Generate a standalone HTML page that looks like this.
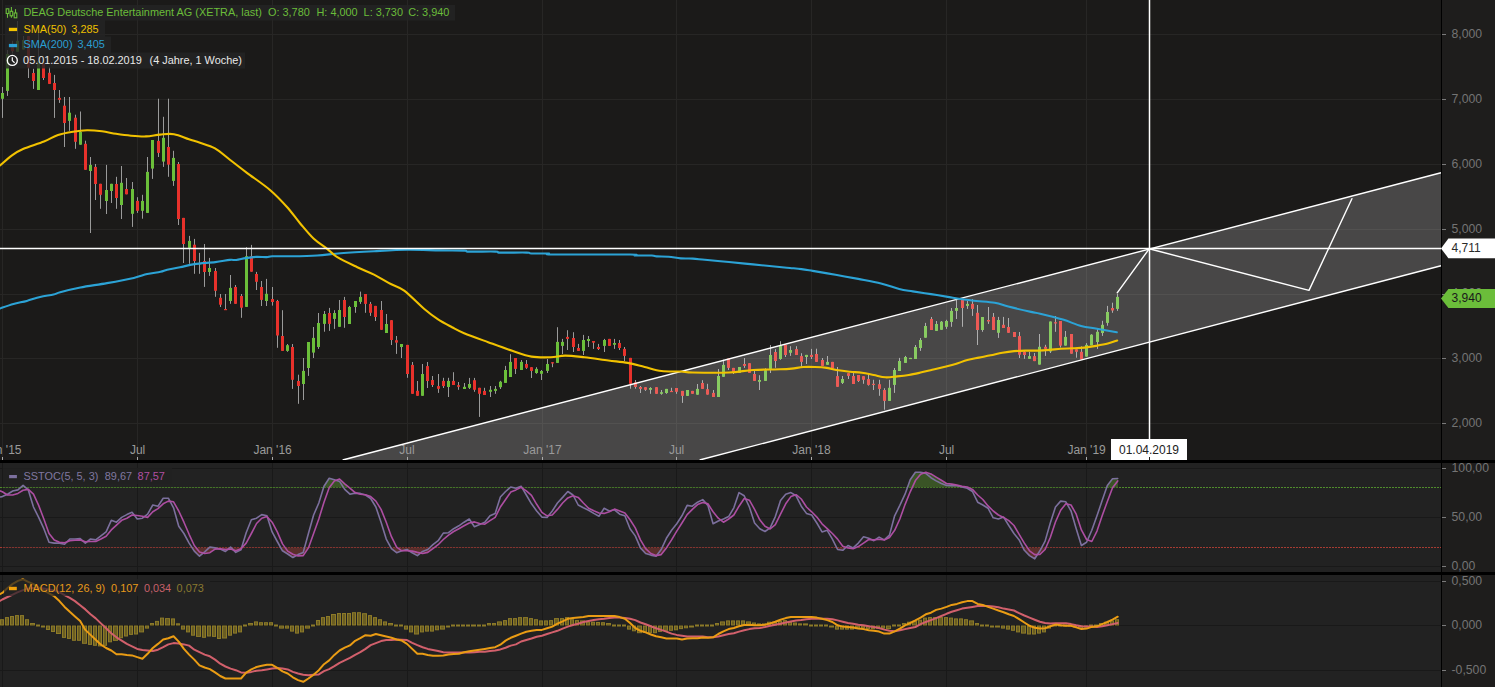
<!DOCTYPE html>
<html><head><meta charset="utf-8"><style>
html,body{margin:0;padding:0;background:#1e1d1c;width:1495px;height:687px;overflow:hidden}
svg{display:block}
</style></head><body>
<svg width="1495" height="687" viewBox="0 0 1495 687">
<rect x="0" y="0" width="1495" height="687" fill="#1e1d1c"/>
<rect x="0" y="0" width="1441" height="460" fill="#1b1a19"/>
<rect x="0" y="463" width="1441" height="109" fill="#222222"/>
<rect x="0" y="575" width="1441" height="112" fill="#222222"/>
<line x1="0" y1="423.5" x2="1441" y2="423.5" stroke="#272625" stroke-width="1"/>
<line x1="0" y1="358.5" x2="1441" y2="358.5" stroke="#272625" stroke-width="1"/>
<line x1="0" y1="294.5" x2="1441" y2="294.5" stroke="#272625" stroke-width="1"/>
<line x1="0" y1="229.5" x2="1441" y2="229.5" stroke="#272625" stroke-width="1"/>
<line x1="0" y1="164.5" x2="1441" y2="164.5" stroke="#272625" stroke-width="1"/>
<line x1="0" y1="99.5" x2="1441" y2="99.5" stroke="#272625" stroke-width="1"/>
<line x1="0" y1="34.5" x2="1441" y2="34.5" stroke="#272625" stroke-width="1"/>
<line x1="2.5" y1="0" x2="2.5" y2="460" stroke="#272625" stroke-width="1"/>
<line x1="137.5" y1="0" x2="137.5" y2="460" stroke="#272625" stroke-width="1"/>
<line x1="272.5" y1="0" x2="272.5" y2="460" stroke="#272625" stroke-width="1"/>
<line x1="407.5" y1="0" x2="407.5" y2="460" stroke="#272625" stroke-width="1"/>
<line x1="542.5" y1="0" x2="542.5" y2="460" stroke="#272625" stroke-width="1"/>
<line x1="676.5" y1="0" x2="676.5" y2="460" stroke="#272625" stroke-width="1"/>
<line x1="811.5" y1="0" x2="811.5" y2="460" stroke="#272625" stroke-width="1"/>
<line x1="946.5" y1="0" x2="946.5" y2="460" stroke="#272625" stroke-width="1"/>
<line x1="1086.5" y1="0" x2="1086.5" y2="460" stroke="#272625" stroke-width="1"/>
<rect x="2" y="87" width="1" height="30.9" fill="#9a9a9a"/>
<rect x="1" y="93" width="3" height="5.8" fill="#6bbf3a"/>
<rect x="7" y="50" width="1" height="45.9" fill="#9a9a9a"/>
<rect x="6" y="54" width="3" height="36.9" fill="#6bbf3a"/>
<rect x="12" y="40.8" width="1" height="12.8" fill="#9a9a9a"/>
<rect x="11" y="47.2" width="3" height="4" fill="#e8312b"/>
<rect x="17" y="21" width="1" height="30.8" fill="#9a9a9a"/>
<rect x="16" y="40.8" width="3" height="11" fill="#6bbf3a"/>
<rect x="23" y="36" width="1" height="13.5" fill="#9a9a9a"/>
<rect x="22" y="40" width="3" height="9.5" fill="#6bbf3a"/>
<rect x="28" y="36" width="1" height="42" fill="#9a9a9a"/>
<rect x="27" y="36.1" width="3" height="31.5" fill="#e8312b"/>
<rect x="33" y="68.7" width="1" height="20.2" fill="#9a9a9a"/>
<rect x="32" y="73" width="3" height="8" fill="#e8312b"/>
<rect x="38" y="32.6" width="1" height="57.4" fill="#9a9a9a"/>
<rect x="37" y="61" width="3" height="29" fill="#6bbf3a"/>
<rect x="43" y="63.5" width="1" height="16.5" fill="#9a9a9a"/>
<rect x="42" y="63.5" width="3" height="14.5" fill="#e8312b"/>
<rect x="49" y="67" width="1" height="16.9" fill="#9a9a9a"/>
<rect x="48" y="72.8" width="3" height="11.1" fill="#e8312b"/>
<rect x="54" y="74.9" width="1" height="43" fill="#9a9a9a"/>
<rect x="53" y="83" width="3" height="7" fill="#e8312b"/>
<rect x="59" y="90" width="1" height="12.9" fill="#9a9a9a"/>
<rect x="58" y="97.9" width="3" height="1.9" fill="#e8312b"/>
<rect x="64" y="97" width="1" height="50" fill="#9a9a9a"/>
<rect x="63" y="105.7" width="3" height="17.3" fill="#e8312b"/>
<rect x="69" y="97" width="1" height="33.8" fill="#9a9a9a"/>
<rect x="68" y="112.7" width="3" height="8.2" fill="#6bbf3a"/>
<rect x="75" y="114.7" width="1" height="34.1" fill="#9a9a9a"/>
<rect x="74" y="117.7" width="3" height="24.1" fill="#e8312b"/>
<rect x="80" y="111.5" width="1" height="33.2" fill="#9a9a9a"/>
<rect x="79" y="131.9" width="3" height="12.8" fill="#6bbf3a"/>
<rect x="85" y="140.7" width="1" height="29.1" fill="#9a9a9a"/>
<rect x="84" y="143.8" width="3" height="26" fill="#e8312b"/>
<rect x="90" y="157" width="1" height="76" fill="#9a9a9a"/>
<rect x="89" y="164.9" width="3" height="6.1" fill="#6bbf3a"/>
<rect x="95" y="164" width="1" height="36" fill="#9a9a9a"/>
<rect x="94" y="166.9" width="3" height="17.1" fill="#e8312b"/>
<rect x="100" y="183.8" width="1" height="25" fill="#9a9a9a"/>
<rect x="99" y="183.8" width="3" height="11" fill="#e8312b"/>
<rect x="106" y="164.9" width="1" height="49.1" fill="#9a9a9a"/>
<rect x="105" y="190" width="3" height="11" fill="#6bbf3a"/>
<rect x="111" y="183.8" width="1" height="19.2" fill="#9a9a9a"/>
<rect x="110" y="183.8" width="3" height="7.2" fill="#6bbf3a"/>
<rect x="116" y="176.8" width="1" height="32" fill="#9a9a9a"/>
<rect x="115" y="184" width="3" height="14" fill="#e8312b"/>
<rect x="121" y="166" width="1" height="53" fill="#9a9a9a"/>
<rect x="120" y="182.8" width="3" height="22.2" fill="#6bbf3a"/>
<rect x="126" y="178" width="1" height="16.3" fill="#9a9a9a"/>
<rect x="125" y="189" width="3" height="5.3" fill="#e8312b"/>
<rect x="132" y="182" width="1" height="44.9" fill="#9a9a9a"/>
<rect x="131" y="189" width="3" height="24.8" fill="#6bbf3a"/>
<rect x="137" y="197.2" width="1" height="15.7" fill="#9a9a9a"/>
<rect x="136" y="200.9" width="3" height="9.9" fill="#e8312b"/>
<rect x="142" y="194.8" width="1" height="23.9" fill="#9a9a9a"/>
<rect x="141" y="200.9" width="3" height="9.9" fill="#6bbf3a"/>
<rect x="147" y="157" width="1" height="55.9" fill="#9a9a9a"/>
<rect x="146" y="171.9" width="3" height="41" fill="#6bbf3a"/>
<rect x="152" y="140" width="1" height="38.9" fill="#9a9a9a"/>
<rect x="151" y="140" width="3" height="28.6" fill="#6bbf3a"/>
<rect x="158" y="98.7" width="1" height="58.3" fill="#9a9a9a"/>
<rect x="157" y="140.9" width="3" height="12" fill="#e8312b"/>
<rect x="163" y="116.8" width="1" height="50.1" fill="#9a9a9a"/>
<rect x="162" y="137.8" width="3" height="23.8" fill="#6bbf3a"/>
<rect x="168" y="98.7" width="1" height="78.1" fill="#9a9a9a"/>
<rect x="167" y="147" width="3" height="17.6" fill="#e8312b"/>
<rect x="173" y="150.8" width="1" height="35.1" fill="#9a9a9a"/>
<rect x="172" y="157.9" width="3" height="23" fill="#6bbf3a"/>
<rect x="178" y="162" width="1" height="63" fill="#9a9a9a"/>
<rect x="177" y="164" width="3" height="55" fill="#e8312b"/>
<rect x="183" y="217.9" width="1" height="45.1" fill="#9a9a9a"/>
<rect x="182" y="217.9" width="3" height="26.1" fill="#e8312b"/>
<rect x="189" y="235.9" width="1" height="27.9" fill="#9a9a9a"/>
<rect x="188" y="240.9" width="3" height="7" fill="#6bbf3a"/>
<rect x="194" y="238.9" width="1" height="34.9" fill="#9a9a9a"/>
<rect x="193" y="244.7" width="3" height="16.3" fill="#e8312b"/>
<rect x="199" y="252.9" width="1" height="20.9" fill="#9a9a9a"/>
<rect x="198" y="263" width="3" height="1.2" fill="#6bbf3a"/>
<rect x="204" y="244" width="1" height="42.9" fill="#9a9a9a"/>
<rect x="203" y="261" width="3" height="11" fill="#e8312b"/>
<rect x="209" y="257.9" width="1" height="18" fill="#9a9a9a"/>
<rect x="208" y="268" width="3" height="4" fill="#6bbf3a"/>
<rect x="215" y="268" width="1" height="28.8" fill="#9a9a9a"/>
<rect x="214" y="271" width="3" height="19.8" fill="#e8312b"/>
<rect x="220" y="294" width="1" height="13" fill="#9a9a9a"/>
<rect x="219" y="297.8" width="3" height="6.9" fill="#e8312b"/>
<rect x="225" y="294" width="1" height="16" fill="#9a9a9a"/>
<rect x="224" y="309" width="3" height="1.2" fill="#e8312b"/>
<rect x="230" y="275" width="1" height="28.8" fill="#9a9a9a"/>
<rect x="229" y="287.9" width="3" height="13.1" fill="#6bbf3a"/>
<rect x="235" y="285" width="1" height="18.8" fill="#9a9a9a"/>
<rect x="234" y="287" width="3" height="16.8" fill="#e8312b"/>
<rect x="241" y="294" width="1" height="23.8" fill="#9a9a9a"/>
<rect x="240" y="296" width="3" height="11.7" fill="#e8312b"/>
<rect x="246" y="247.2" width="1" height="59.7" fill="#9a9a9a"/>
<rect x="245" y="256.2" width="3" height="50.7" fill="#6bbf3a"/>
<rect x="251" y="244.9" width="1" height="26.8" fill="#9a9a9a"/>
<rect x="250" y="256.2" width="3" height="15.5" fill="#e8312b"/>
<rect x="256" y="271.9" width="1" height="18.1" fill="#9a9a9a"/>
<rect x="255" y="274" width="3" height="7.8" fill="#e8312b"/>
<rect x="261" y="281" width="1" height="25" fill="#9a9a9a"/>
<rect x="260" y="287" width="3" height="12.9" fill="#e8312b"/>
<rect x="266" y="278.9" width="1" height="27.1" fill="#9a9a9a"/>
<rect x="265" y="293.8" width="3" height="7.2" fill="#6bbf3a"/>
<rect x="272" y="287" width="1" height="18.6" fill="#9a9a9a"/>
<rect x="271" y="299" width="3" height="3" fill="#e8312b"/>
<rect x="277" y="299.9" width="1" height="47.9" fill="#9a9a9a"/>
<rect x="276" y="301" width="3" height="34.5" fill="#e8312b"/>
<rect x="282" y="310.2" width="1" height="40.7" fill="#9a9a9a"/>
<rect x="281" y="336" width="3" height="14.9" fill="#e8312b"/>
<rect x="287" y="344" width="1" height="7.8" fill="#9a9a9a"/>
<rect x="286" y="345.2" width="3" height="5.7" fill="#6bbf3a"/>
<rect x="292" y="344" width="1" height="44.9" fill="#9a9a9a"/>
<rect x="291" y="347" width="3" height="32.8" fill="#e8312b"/>
<rect x="298" y="374.7" width="1" height="29.1" fill="#9a9a9a"/>
<rect x="297" y="381" width="3" height="5" fill="#e8312b"/>
<rect x="303" y="358" width="1" height="42" fill="#9a9a9a"/>
<rect x="302" y="370.9" width="3" height="13.1" fill="#6bbf3a"/>
<rect x="308" y="342" width="1" height="33.9" fill="#9a9a9a"/>
<rect x="307" y="342" width="3" height="26" fill="#6bbf3a"/>
<rect x="313" y="327" width="1" height="31" fill="#9a9a9a"/>
<rect x="312" y="337.9" width="3" height="14.7" fill="#6bbf3a"/>
<rect x="318" y="313" width="1" height="35.9" fill="#9a9a9a"/>
<rect x="317" y="323" width="3" height="24" fill="#6bbf3a"/>
<rect x="324" y="311" width="1" height="20.7" fill="#9a9a9a"/>
<rect x="323" y="314" width="3" height="9.9" fill="#6bbf3a"/>
<rect x="329" y="307.9" width="1" height="23" fill="#9a9a9a"/>
<rect x="328" y="313" width="3" height="10.9" fill="#e8312b"/>
<rect x="334" y="310.2" width="1" height="18.7" fill="#9a9a9a"/>
<rect x="333" y="313" width="3" height="5.9" fill="#6bbf3a"/>
<rect x="339" y="300" width="1" height="26.8" fill="#9a9a9a"/>
<rect x="338" y="310" width="3" height="16.8" fill="#6bbf3a"/>
<rect x="344" y="296.9" width="1" height="30.9" fill="#9a9a9a"/>
<rect x="343" y="300" width="3" height="17" fill="#e8312b"/>
<rect x="349" y="305.9" width="1" height="18.1" fill="#9a9a9a"/>
<rect x="348" y="307" width="3" height="17" fill="#6bbf3a"/>
<rect x="355" y="301" width="1" height="11.8" fill="#9a9a9a"/>
<rect x="354" y="301" width="3" height="6" fill="#6bbf3a"/>
<rect x="360" y="291.6" width="1" height="12.3" fill="#9a9a9a"/>
<rect x="359" y="296.9" width="3" height="5" fill="#6bbf3a"/>
<rect x="365" y="294" width="1" height="18.8" fill="#9a9a9a"/>
<rect x="364" y="294" width="3" height="9.9" fill="#e8312b"/>
<rect x="370" y="301.9" width="1" height="14" fill="#9a9a9a"/>
<rect x="369" y="303.9" width="3" height="8.9" fill="#e8312b"/>
<rect x="375" y="305.9" width="1" height="15.1" fill="#9a9a9a"/>
<rect x="374" y="305.9" width="3" height="11.1" fill="#e8312b"/>
<rect x="381" y="301" width="1" height="28.8" fill="#9a9a9a"/>
<rect x="380" y="310" width="3" height="19.8" fill="#e8312b"/>
<rect x="386" y="314" width="1" height="19" fill="#9a9a9a"/>
<rect x="385" y="324" width="3" height="9" fill="#6bbf3a"/>
<rect x="391" y="320.2" width="1" height="24.8" fill="#9a9a9a"/>
<rect x="390" y="320.2" width="3" height="19.8" fill="#e8312b"/>
<rect x="396" y="336" width="1" height="17.9" fill="#9a9a9a"/>
<rect x="395" y="340.2" width="3" height="2.4" fill="#e8312b"/>
<rect x="401" y="344" width="1" height="14" fill="#9a9a9a"/>
<rect x="400" y="344" width="3" height="3" fill="#6bbf3a"/>
<rect x="407" y="344.9" width="1" height="32.9" fill="#9a9a9a"/>
<rect x="406" y="344.9" width="3" height="29.1" fill="#e8312b"/>
<rect x="412" y="362" width="1" height="31.8" fill="#9a9a9a"/>
<rect x="411" y="364.9" width="3" height="28.9" fill="#e8312b"/>
<rect x="417" y="381" width="1" height="14.8" fill="#9a9a9a"/>
<rect x="416" y="390.8" width="3" height="5" fill="#e8312b"/>
<rect x="422" y="364" width="1" height="31.8" fill="#9a9a9a"/>
<rect x="421" y="374" width="3" height="21.8" fill="#6bbf3a"/>
<rect x="427" y="362" width="1" height="26" fill="#9a9a9a"/>
<rect x="426" y="366.1" width="3" height="14.9" fill="#e8312b"/>
<rect x="432" y="376" width="1" height="11" fill="#9a9a9a"/>
<rect x="431" y="380" width="3" height="5" fill="#e8312b"/>
<rect x="438" y="374" width="1" height="18.9" fill="#9a9a9a"/>
<rect x="437" y="386.1" width="3" height="2.7" fill="#e8312b"/>
<rect x="443" y="377.8" width="1" height="10.2" fill="#9a9a9a"/>
<rect x="442" y="380.9" width="3" height="5.2" fill="#e8312b"/>
<rect x="448" y="377.8" width="1" height="19.2" fill="#9a9a9a"/>
<rect x="447" y="380.9" width="3" height="6.1" fill="#6bbf3a"/>
<rect x="453" y="372.2" width="1" height="12.8" fill="#9a9a9a"/>
<rect x="452" y="380.9" width="3" height="4.1" fill="#e8312b"/>
<rect x="458" y="382" width="1" height="7.8" fill="#9a9a9a"/>
<rect x="457" y="385.2" width="3" height="1.6" fill="#e8312b"/>
<rect x="464" y="383" width="1" height="6" fill="#9a9a9a"/>
<rect x="463" y="386.8" width="3" height="2.2" fill="#6bbf3a"/>
<rect x="469" y="377.9" width="1" height="11.1" fill="#9a9a9a"/>
<rect x="468" y="384" width="3" height="3.8" fill="#6bbf3a"/>
<rect x="474" y="377.9" width="1" height="13.9" fill="#9a9a9a"/>
<rect x="473" y="380.2" width="3" height="9.6" fill="#e8312b"/>
<rect x="479" y="387.8" width="1" height="29.1" fill="#9a9a9a"/>
<rect x="478" y="387.8" width="3" height="6" fill="#e8312b"/>
<rect x="484" y="387.8" width="1" height="7.2" fill="#9a9a9a"/>
<rect x="483" y="390.9" width="3" height="4.1" fill="#e8312b"/>
<rect x="490" y="386" width="1" height="11" fill="#9a9a9a"/>
<rect x="489" y="389.8" width="3" height="2" fill="#6bbf3a"/>
<rect x="495" y="386" width="1" height="7.8" fill="#9a9a9a"/>
<rect x="494" y="388.9" width="3" height="2" fill="#6bbf3a"/>
<rect x="500" y="380.8" width="1" height="8.2" fill="#9a9a9a"/>
<rect x="499" y="381.7" width="3" height="5.5" fill="#6bbf3a"/>
<rect x="505" y="365.9" width="1" height="17" fill="#9a9a9a"/>
<rect x="504" y="370" width="3" height="12.9" fill="#6bbf3a"/>
<rect x="510" y="354.2" width="1" height="22.8" fill="#9a9a9a"/>
<rect x="509" y="361.9" width="3" height="15.1" fill="#6bbf3a"/>
<rect x="515" y="358" width="1" height="16" fill="#9a9a9a"/>
<rect x="514" y="358" width="3" height="10.9" fill="#e8312b"/>
<rect x="521" y="360" width="1" height="10" fill="#9a9a9a"/>
<rect x="520" y="361.9" width="3" height="8.1" fill="#6bbf3a"/>
<rect x="526" y="360" width="1" height="8.9" fill="#9a9a9a"/>
<rect x="525" y="364" width="3" height="3.8" fill="#e8312b"/>
<rect x="531" y="367.2" width="1" height="10.8" fill="#9a9a9a"/>
<rect x="530" y="367.2" width="3" height="3.7" fill="#e8312b"/>
<rect x="536" y="367.2" width="1" height="6.6" fill="#9a9a9a"/>
<rect x="535" y="368.9" width="3" height="4.1" fill="#6bbf3a"/>
<rect x="541" y="370" width="1" height="10" fill="#9a9a9a"/>
<rect x="540" y="371" width="3" height="2.8" fill="#6bbf3a"/>
<rect x="547" y="359" width="1" height="14" fill="#9a9a9a"/>
<rect x="546" y="364" width="3" height="6.9" fill="#6bbf3a"/>
<rect x="552" y="362.2" width="1" height="5" fill="#9a9a9a"/>
<rect x="551" y="362.2" width="3" height="1.3" fill="#e8312b"/>
<rect x="557" y="327.2" width="1" height="35.7" fill="#9a9a9a"/>
<rect x="556" y="341.9" width="3" height="21" fill="#6bbf3a"/>
<rect x="562" y="338.9" width="1" height="15.1" fill="#9a9a9a"/>
<rect x="561" y="341.9" width="3" height="4" fill="#6bbf3a"/>
<rect x="567" y="330.2" width="1" height="19.8" fill="#9a9a9a"/>
<rect x="566" y="336.9" width="3" height="2" fill="#e8312b"/>
<rect x="573" y="332.2" width="1" height="19.8" fill="#9a9a9a"/>
<rect x="572" y="338" width="3" height="9" fill="#e8312b"/>
<rect x="578" y="343.9" width="1" height="7" fill="#9a9a9a"/>
<rect x="577" y="348" width="3" height="2.9" fill="#e8312b"/>
<rect x="583" y="334.9" width="1" height="20.1" fill="#9a9a9a"/>
<rect x="582" y="340" width="3" height="10.9" fill="#6bbf3a"/>
<rect x="588" y="336" width="1" height="11" fill="#9a9a9a"/>
<rect x="587" y="339" width="3" height="2" fill="#6bbf3a"/>
<rect x="593" y="341" width="1" height="7.9" fill="#9a9a9a"/>
<rect x="592" y="341" width="3" height="1.7" fill="#e8312b"/>
<rect x="598" y="343.9" width="1" height="6.1" fill="#9a9a9a"/>
<rect x="597" y="347" width="3" height="2" fill="#e8312b"/>
<rect x="604" y="338.9" width="1" height="13.1" fill="#9a9a9a"/>
<rect x="603" y="340" width="3" height="5.9" fill="#6bbf3a"/>
<rect x="609" y="338.9" width="1" height="7" fill="#9a9a9a"/>
<rect x="608" y="338.9" width="3" height="7" fill="#e8312b"/>
<rect x="614" y="338.9" width="1" height="10" fill="#9a9a9a"/>
<rect x="613" y="343" width="3" height="1.8" fill="#6bbf3a"/>
<rect x="619" y="340" width="1" height="10" fill="#9a9a9a"/>
<rect x="618" y="343" width="3" height="5" fill="#e8312b"/>
<rect x="624" y="347" width="1" height="14" fill="#9a9a9a"/>
<rect x="623" y="348.9" width="3" height="7" fill="#e8312b"/>
<rect x="630" y="357.9" width="1" height="30.8" fill="#9a9a9a"/>
<rect x="629" y="357.9" width="3" height="25.9" fill="#e8312b"/>
<rect x="635" y="380" width="1" height="8.7" fill="#9a9a9a"/>
<rect x="634" y="382.3" width="3" height="4.7" fill="#e8312b"/>
<rect x="640" y="386" width="1" height="7" fill="#9a9a9a"/>
<rect x="639" y="387" width="3" height="1.9" fill="#e8312b"/>
<rect x="645" y="387.2" width="1" height="3.7" fill="#9a9a9a"/>
<rect x="644" y="387.2" width="3" height="2.6" fill="#e8312b"/>
<rect x="650" y="387.2" width="1" height="6.6" fill="#9a9a9a"/>
<rect x="649" y="388" width="3" height="1.8" fill="#6bbf3a"/>
<rect x="656" y="387.2" width="1" height="6.6" fill="#9a9a9a"/>
<rect x="655" y="387.2" width="3" height="6.6" fill="#e8312b"/>
<rect x="661" y="390" width="1" height="4.7" fill="#9a9a9a"/>
<rect x="660" y="392.2" width="3" height="1.6" fill="#6bbf3a"/>
<rect x="666" y="388.9" width="1" height="4.9" fill="#9a9a9a"/>
<rect x="665" y="388.9" width="3" height="4.1" fill="#6bbf3a"/>
<rect x="671" y="387.8" width="1" height="4.2" fill="#9a9a9a"/>
<rect x="670" y="390.9" width="3" height="1.2" fill="#e8312b"/>
<rect x="676" y="388" width="1" height="5.8" fill="#9a9a9a"/>
<rect x="675" y="388" width="3" height="3.8" fill="#e8312b"/>
<rect x="682" y="390.9" width="1" height="12" fill="#9a9a9a"/>
<rect x="681" y="390.9" width="3" height="5" fill="#e8312b"/>
<rect x="687" y="390" width="1" height="5.9" fill="#9a9a9a"/>
<rect x="686" y="390" width="3" height="5.9" fill="#6bbf3a"/>
<rect x="692" y="390.9" width="1" height="2.9" fill="#9a9a9a"/>
<rect x="691" y="390.9" width="3" height="2.9" fill="#e8312b"/>
<rect x="697" y="384" width="1" height="10.7" fill="#9a9a9a"/>
<rect x="696" y="388.9" width="3" height="5.8" fill="#6bbf3a"/>
<rect x="702" y="380.2" width="1" height="8.7" fill="#9a9a9a"/>
<rect x="701" y="383" width="3" height="5.9" fill="#e8312b"/>
<rect x="707" y="383.8" width="1" height="10.8" fill="#9a9a9a"/>
<rect x="706" y="389.2" width="3" height="5.4" fill="#e8312b"/>
<rect x="713" y="390" width="1" height="7" fill="#9a9a9a"/>
<rect x="712" y="392.9" width="3" height="4.1" fill="#e8312b"/>
<rect x="718" y="369" width="1" height="28" fill="#9a9a9a"/>
<rect x="717" y="376" width="3" height="21" fill="#6bbf3a"/>
<rect x="723" y="359.7" width="1" height="17.1" fill="#9a9a9a"/>
<rect x="722" y="364.9" width="3" height="11.9" fill="#6bbf3a"/>
<rect x="728" y="358.5" width="1" height="11.5" fill="#9a9a9a"/>
<rect x="727" y="358.5" width="3" height="9.4" fill="#e8312b"/>
<rect x="733" y="367.9" width="1" height="6.1" fill="#9a9a9a"/>
<rect x="732" y="367.9" width="3" height="4.1" fill="#e8312b"/>
<rect x="739" y="367" width="1" height="5.9" fill="#9a9a9a"/>
<rect x="738" y="367" width="3" height="5.9" fill="#6bbf3a"/>
<rect x="744" y="358" width="1" height="9.9" fill="#9a9a9a"/>
<rect x="743" y="364" width="3" height="1.9" fill="#e8312b"/>
<rect x="749" y="363.2" width="1" height="9.7" fill="#9a9a9a"/>
<rect x="748" y="363.2" width="3" height="9.7" fill="#e8312b"/>
<rect x="754" y="370" width="1" height="10.9" fill="#9a9a9a"/>
<rect x="753" y="374" width="3" height="6.9" fill="#e8312b"/>
<rect x="759" y="375.2" width="1" height="14.8" fill="#9a9a9a"/>
<rect x="758" y="380" width="3" height="1.8" fill="#6bbf3a"/>
<rect x="765" y="368.3" width="1" height="12.6" fill="#9a9a9a"/>
<rect x="764" y="370.2" width="3" height="10.7" fill="#6bbf3a"/>
<rect x="770" y="345" width="1" height="28" fill="#9a9a9a"/>
<rect x="769" y="355" width="3" height="13.9" fill="#6bbf3a"/>
<rect x="775" y="349.1" width="1" height="18.7" fill="#9a9a9a"/>
<rect x="774" y="352" width="3" height="9" fill="#e8312b"/>
<rect x="780" y="341.2" width="1" height="18.6" fill="#9a9a9a"/>
<rect x="779" y="345.9" width="3" height="13.1" fill="#6bbf3a"/>
<rect x="785" y="345" width="1" height="12" fill="#9a9a9a"/>
<rect x="784" y="345" width="3" height="10" fill="#e8312b"/>
<rect x="790" y="346.2" width="1" height="9.7" fill="#9a9a9a"/>
<rect x="789" y="350" width="3" height="2.8" fill="#6bbf3a"/>
<rect x="796" y="346.2" width="1" height="8.8" fill="#9a9a9a"/>
<rect x="795" y="349.1" width="3" height="5.9" fill="#e8312b"/>
<rect x="801" y="353.2" width="1" height="13.4" fill="#9a9a9a"/>
<rect x="800" y="356.1" width="3" height="5.8" fill="#e8312b"/>
<rect x="806" y="354.9" width="1" height="9.1" fill="#9a9a9a"/>
<rect x="805" y="354.9" width="3" height="2.1" fill="#6bbf3a"/>
<rect x="811" y="348.9" width="1" height="10.1" fill="#9a9a9a"/>
<rect x="810" y="354.9" width="3" height="2.1" fill="#e8312b"/>
<rect x="816" y="348.7" width="1" height="13.2" fill="#9a9a9a"/>
<rect x="815" y="354" width="3" height="7.9" fill="#e8312b"/>
<rect x="822" y="358" width="1" height="7.9" fill="#9a9a9a"/>
<rect x="821" y="360" width="3" height="5.9" fill="#e8312b"/>
<rect x="827" y="356" width="1" height="8.8" fill="#9a9a9a"/>
<rect x="826" y="361.9" width="3" height="2.9" fill="#6bbf3a"/>
<rect x="832" y="361.9" width="1" height="6.6" fill="#9a9a9a"/>
<rect x="831" y="361.9" width="3" height="6.6" fill="#e8312b"/>
<rect x="837" y="367" width="1" height="19.8" fill="#9a9a9a"/>
<rect x="836" y="376.1" width="3" height="10.7" fill="#e8312b"/>
<rect x="842" y="376" width="1" height="8" fill="#9a9a9a"/>
<rect x="841" y="379" width="3" height="3.9" fill="#6bbf3a"/>
<rect x="848" y="373.2" width="1" height="5.8" fill="#9a9a9a"/>
<rect x="847" y="373.2" width="3" height="2.7" fill="#e8312b"/>
<rect x="853" y="371.4" width="1" height="12.6" fill="#9a9a9a"/>
<rect x="852" y="376" width="3" height="8" fill="#e8312b"/>
<rect x="858" y="375" width="1" height="7" fill="#9a9a9a"/>
<rect x="857" y="375" width="3" height="6" fill="#e8312b"/>
<rect x="863" y="376.2" width="1" height="7.6" fill="#9a9a9a"/>
<rect x="862" y="376.2" width="3" height="3.6" fill="#e8312b"/>
<rect x="868" y="373.3" width="1" height="12.3" fill="#9a9a9a"/>
<rect x="867" y="379.1" width="3" height="5.8" fill="#e8312b"/>
<rect x="873" y="379.8" width="1" height="10.2" fill="#9a9a9a"/>
<rect x="872" y="383.8" width="3" height="1.2" fill="#e8312b"/>
<rect x="879" y="379.8" width="1" height="16" fill="#9a9a9a"/>
<rect x="878" y="384.2" width="3" height="4.7" fill="#e8312b"/>
<rect x="884" y="388.2" width="1" height="21.5" fill="#9a9a9a"/>
<rect x="883" y="390" width="3" height="10.9" fill="#e8312b"/>
<rect x="889" y="379.8" width="1" height="21.1" fill="#9a9a9a"/>
<rect x="888" y="387.8" width="3" height="13.1" fill="#6bbf3a"/>
<rect x="894" y="368" width="1" height="24.9" fill="#9a9a9a"/>
<rect x="893" y="370" width="3" height="14.9" fill="#6bbf3a"/>
<rect x="899" y="357.9" width="1" height="13.1" fill="#9a9a9a"/>
<rect x="898" y="361" width="3" height="10" fill="#6bbf3a"/>
<rect x="905" y="355.9" width="1" height="7" fill="#9a9a9a"/>
<rect x="904" y="357" width="3" height="5.9" fill="#6bbf3a"/>
<rect x="910" y="357.9" width="1" height="1.1" fill="#9a9a9a"/>
<rect x="909" y="357.9" width="3" height="1.2" fill="#6bbf3a"/>
<rect x="915" y="345" width="1" height="14" fill="#9a9a9a"/>
<rect x="914" y="347" width="3" height="12" fill="#6bbf3a"/>
<rect x="920" y="338" width="1" height="12.9" fill="#9a9a9a"/>
<rect x="919" y="340" width="3" height="8" fill="#6bbf3a"/>
<rect x="925" y="322.9" width="1" height="14.8" fill="#9a9a9a"/>
<rect x="924" y="326" width="3" height="11.7" fill="#6bbf3a"/>
<rect x="931" y="317" width="1" height="13" fill="#9a9a9a"/>
<rect x="930" y="319" width="3" height="11" fill="#e8312b"/>
<rect x="936" y="321" width="1" height="9.9" fill="#9a9a9a"/>
<rect x="935" y="324" width="3" height="6.9" fill="#6bbf3a"/>
<rect x="941" y="321" width="1" height="8.8" fill="#9a9a9a"/>
<rect x="940" y="321.7" width="3" height="8.1" fill="#6bbf3a"/>
<rect x="946" y="319.8" width="1" height="9.1" fill="#9a9a9a"/>
<rect x="945" y="321" width="3" height="5.8" fill="#6bbf3a"/>
<rect x="951" y="308" width="1" height="18.8" fill="#9a9a9a"/>
<rect x="950" y="310.9" width="3" height="11" fill="#6bbf3a"/>
<rect x="956" y="299.2" width="1" height="19.8" fill="#9a9a9a"/>
<rect x="955" y="308" width="3" height="2.9" fill="#6bbf3a"/>
<rect x="962" y="300" width="1" height="26.8" fill="#9a9a9a"/>
<rect x="961" y="300" width="3" height="8" fill="#e8312b"/>
<rect x="967" y="301" width="1" height="7.9" fill="#9a9a9a"/>
<rect x="966" y="303.9" width="3" height="2" fill="#6bbf3a"/>
<rect x="972" y="299.2" width="1" height="16.7" fill="#9a9a9a"/>
<rect x="971" y="303.9" width="3" height="5" fill="#e8312b"/>
<rect x="977" y="305" width="1" height="40" fill="#9a9a9a"/>
<rect x="976" y="312.8" width="3" height="17.2" fill="#e8312b"/>
<rect x="982" y="317" width="1" height="14.8" fill="#9a9a9a"/>
<rect x="981" y="317" width="3" height="13" fill="#6bbf3a"/>
<rect x="988" y="307" width="1" height="16.9" fill="#9a9a9a"/>
<rect x="987" y="320" width="3" height="1.5" fill="#e8312b"/>
<rect x="993" y="313" width="1" height="17" fill="#9a9a9a"/>
<rect x="992" y="316.9" width="3" height="13.1" fill="#e8312b"/>
<rect x="998" y="316.9" width="1" height="21" fill="#9a9a9a"/>
<rect x="997" y="320" width="3" height="12.8" fill="#6bbf3a"/>
<rect x="1003" y="316.9" width="1" height="11.1" fill="#9a9a9a"/>
<rect x="1002" y="324.8" width="3" height="3.2" fill="#e8312b"/>
<rect x="1008" y="318" width="1" height="14.8" fill="#9a9a9a"/>
<rect x="1007" y="327" width="3" height="5.8" fill="#e8312b"/>
<rect x="1014" y="332" width="1" height="5" fill="#9a9a9a"/>
<rect x="1013" y="332" width="3" height="5" fill="#e8312b"/>
<rect x="1019" y="332" width="1" height="26" fill="#9a9a9a"/>
<rect x="1018" y="336.1" width="3" height="18.6" fill="#e8312b"/>
<rect x="1024" y="350" width="1" height="8.8" fill="#9a9a9a"/>
<rect x="1023" y="351.8" width="3" height="3.2" fill="#e8312b"/>
<rect x="1029" y="351.8" width="1" height="7" fill="#9a9a9a"/>
<rect x="1028" y="356.1" width="3" height="2.7" fill="#6bbf3a"/>
<rect x="1034" y="353" width="1" height="8.1" fill="#9a9a9a"/>
<rect x="1033" y="356.1" width="3" height="5" fill="#e8312b"/>
<rect x="1039" y="334" width="1" height="30.6" fill="#9a9a9a"/>
<rect x="1038" y="346.8" width="3" height="17.8" fill="#6bbf3a"/>
<rect x="1045" y="344.8" width="1" height="11.1" fill="#9a9a9a"/>
<rect x="1044" y="346.8" width="3" height="2.1" fill="#e8312b"/>
<rect x="1050" y="321.5" width="1" height="31.5" fill="#9a9a9a"/>
<rect x="1049" y="321.5" width="3" height="30" fill="#6bbf3a"/>
<rect x="1055" y="316" width="1" height="15.8" fill="#9a9a9a"/>
<rect x="1054" y="322.2" width="3" height="1.3" fill="#e8312b"/>
<rect x="1060" y="321" width="1" height="26.5" fill="#9a9a9a"/>
<rect x="1059" y="321" width="3" height="24.6" fill="#e8312b"/>
<rect x="1065" y="331" width="1" height="14.6" fill="#9a9a9a"/>
<rect x="1064" y="336.9" width="3" height="8.7" fill="#6bbf3a"/>
<rect x="1071" y="334" width="1" height="19.7" fill="#9a9a9a"/>
<rect x="1070" y="334" width="3" height="19.7" fill="#e8312b"/>
<rect x="1076" y="349.3" width="1" height="8.4" fill="#9a9a9a"/>
<rect x="1075" y="349.3" width="3" height="2.5" fill="#e8312b"/>
<rect x="1081" y="346.4" width="1" height="13.1" fill="#9a9a9a"/>
<rect x="1080" y="351.8" width="3" height="7.7" fill="#e8312b"/>
<rect x="1086" y="343.1" width="1" height="13.5" fill="#9a9a9a"/>
<rect x="1085" y="344.9" width="3" height="11.7" fill="#6bbf3a"/>
<rect x="1091" y="334.2" width="1" height="11.1" fill="#9a9a9a"/>
<rect x="1090" y="334.7" width="3" height="10.6" fill="#6bbf3a"/>
<rect x="1097" y="328.9" width="1" height="20" fill="#9a9a9a"/>
<rect x="1096" y="331.8" width="3" height="10.2" fill="#6bbf3a"/>
<rect x="1102" y="320.8" width="1" height="15.1" fill="#9a9a9a"/>
<rect x="1101" y="324.8" width="3" height="8.2" fill="#6bbf3a"/>
<rect x="1107" y="305.9" width="1" height="19.8" fill="#9a9a9a"/>
<rect x="1106" y="312" width="3" height="10.9" fill="#6bbf3a"/>
<rect x="1112" y="302.7" width="1" height="10.1" fill="#9a9a9a"/>
<rect x="1111" y="308" width="3" height="2.5" fill="#e8312b"/>
<rect x="1117" y="294" width="1" height="16.9" fill="#9a9a9a"/>
<rect x="1116" y="296.9" width="3" height="12" fill="#6bbf3a"/>
<polygon points="342.62,460 1441.0,172.77 1441.0,265.76 699.62,460" fill="rgba(255,255,255,0.2)"/>
<line x1="342.62" y1="460" x2="1441.0" y2="172.77" stroke="#fff" stroke-width="1.4"/>
<line x1="699.62" y1="460" x2="1441.0" y2="265.76" stroke="#fff" stroke-width="1.4"/>
<path d="M0,308.5 C2.23,307.75 8.93,305.27 13.4,304 C17.87,302.73 22.35,302.08 26.8,300.9 C31.25,299.72 35.65,297.95 40.1,296.9 C44.55,295.85 50.15,295.38 53.5,294.6 C56.85,293.82 55.73,293.38 60.2,292.2 C64.67,291.02 72.5,289.02 80.3,287.5 C88.1,285.98 98.08,284.7 107,283.1 C115.92,281.5 127.1,279.4 133.8,277.9 C140.5,276.4 142.75,275.12 147.2,274.1 C151.65,273.08 157.17,272.53 160.5,271.8 C163.83,271.07 163.95,270.45 167.2,269.7 C170.45,268.95 175.47,268.23 180,267.3 C184.53,266.37 188.52,264.97 194.4,264.1 C200.28,263.23 209.4,262.8 215.3,262.1 C221.2,261.4 226.32,260.25 229.8,259.9 C233.28,259.55 233.53,260.3 236.2,260 C238.87,259.7 242.47,258.62 245.8,258.1 C249.13,257.58 252.72,257.07 256.2,256.9 C259.68,256.73 264.02,257.22 266.7,257.1 C269.38,256.98 268.35,256.33 272.3,256.2 C276.25,256.07 282.92,256.42 290.4,256.3 C297.88,256.18 308.83,256.02 317.2,255.5 C325.57,254.98 331.13,253.92 340.6,253.2 C350.07,252.48 362.85,251.77 374,251.2 C385.15,250.63 396.5,249.93 407.5,249.8 C418.5,249.67 430.58,250.27 440,250.4 C449.42,250.53 459.17,250.4 464,250.6 C468.83,250.8 463.77,251.43 469,251.6 C474.23,251.77 490.2,251.43 495.4,251.6 C500.6,251.77 494.98,252.43 500.2,252.6 C505.42,252.77 521.48,252.45 526.7,252.6 C531.92,252.75 527.88,253.35 531.5,253.5 C535.12,253.65 544.78,253.33 548.4,253.5 C552.02,253.67 539.57,254.33 553.2,254.5 C566.83,254.67 616.57,254.33 630.2,254.5 C643.83,254.67 631.38,255.33 635,255.5 C638.62,255.67 648.28,255.35 651.9,255.5 C655.52,255.65 653.9,256.2 656.7,256.4 C659.5,256.6 664.68,256.37 668.7,256.7 C672.72,257.03 676.78,258.08 680.8,258.4 C684.82,258.72 688.78,258.37 692.8,258.6 C696.82,258.83 698.87,259.23 704.9,259.8 C710.93,260.37 720.98,261.23 729,262 C737.02,262.77 745,263.6 753,264.4 C761,265.2 770.83,266.2 777,266.8 C783.17,267.4 785.93,267.62 790,268 C794.07,268.38 797.62,268.62 801.4,269.1 C805.18,269.58 807.02,269.95 812.7,270.9 C818.38,271.85 827.92,273.47 835.5,274.8 C843.08,276.13 850.62,277.47 858.2,278.9 C865.78,280.33 874.17,281.7 881,283.4 C887.83,285.1 893.9,287.77 899.2,289.1 C904.5,290.43 907.5,290.57 912.8,291.4 C918.1,292.23 924.93,293.15 931,294.1 C937.07,295.05 942.37,296.03 949.2,297.1 C956.03,298.17 964.42,299.55 972,300.5 C979.58,301.45 988.65,301.78 994.7,302.8 C1000.75,303.82 1002.25,305.08 1008.3,306.6 C1014.35,308.12 1025.68,310.72 1031,311.9 C1036.32,313.08 1034.88,312.42 1040.2,313.7 C1045.52,314.98 1056.08,317.55 1062.9,319.6 C1069.72,321.65 1075.42,324.48 1081.1,326 C1086.78,327.52 1091.05,327.65 1097,328.7 C1102.95,329.75 1113.5,331.7 1116.8,332.3" fill="none" stroke="#2ca3d6" stroke-width="2.1" stroke-linecap="round"/>
<path d="M0,165.5 C2,163.8 8.17,158.05 12,155.3 C15.83,152.55 17.67,151.3 23,149 C28.33,146.7 38.17,143.83 44,141.5 C49.83,139.17 53.17,136.63 58,135 C62.83,133.37 68.17,132.48 73,131.7 C77.83,130.92 82.17,130.37 87,130.3 C91.83,130.23 97.17,130.72 102,131.3 C106.83,131.88 111.17,133.07 116,133.8 C120.83,134.53 126,135.27 131,135.7 C136,136.13 141.17,136.58 146,136.4 C150.83,136.22 155.33,134.97 160,134.6 C164.67,134.23 169.17,133.42 174,134.2 C178.83,134.98 184.67,137.88 189,139.3 C193.33,140.72 195.67,141.18 200,142.7 C204.33,144.22 209.97,145.52 215,148.4 C220.03,151.28 224.88,155.93 230.2,160 C235.52,164.07 240.22,167.77 246.9,172.8 C253.58,177.83 263.62,184.5 270.3,190.2 C276.98,195.9 281.98,201.42 287,207 C292.02,212.58 295.93,218.4 300.4,223.7 C304.87,229 309.33,234.62 313.8,238.8 C318.27,242.98 323.28,245.73 327.2,248.8 C331.12,251.87 332.28,254.13 337.3,257.2 C342.32,260.27 351.18,264.3 357.3,267.2 C363.42,270.1 368.42,271.8 374,274.6 C379.58,277.4 385.77,281.33 390.8,284 C395.83,286.67 398.62,286.43 404.2,290.6 C409.78,294.77 418.72,304.25 424.3,309 C429.88,313.75 433.08,316.07 437.7,319.1 C442.32,322.13 447.6,324.85 452,327.2 C456.4,329.55 458.07,330.7 464.1,333.2 C470.13,335.7 480.18,339.27 488.2,342.2 C496.22,345.13 504.98,348.4 512.2,350.8 C519.42,353.2 525.07,355.52 531.5,356.6 C537.93,357.68 545.18,357.47 550.8,357.3 C556.42,357.13 559.58,355.6 565.2,355.6 C570.82,355.6 577.28,356.48 584.5,357.3 C591.72,358.12 601.28,359.57 608.5,360.5 C615.72,361.43 621.77,361.82 627.8,362.9 C633.83,363.98 639.08,365.65 644.7,367 C650.32,368.35 655.48,370.25 661.5,371 C667.52,371.75 675.58,371.25 680.8,371.5 C686.02,371.75 684.77,372.33 692.8,372.5 C700.83,372.67 718.97,372.92 729,372.5 C739.03,372.08 744.5,370.53 753,370 C761.5,369.47 773.55,369.53 780,369.3 C786.45,369.07 787.8,368.98 791.7,368.6 C795.6,368.22 799.5,367.27 803.4,367 C807.3,366.73 811.2,366.85 815.1,367 C819,367.15 822.9,367.35 826.8,367.9 C830.7,368.45 834.6,369.67 838.5,370.3 C842.4,370.93 846.3,371.28 850.2,371.7 C854.1,372.12 857.98,372.25 861.9,372.8 C865.82,373.35 869.78,374.25 873.7,375 C877.62,375.75 881.5,377.07 885.4,377.3 C889.3,377.53 893.2,376.78 897.1,376.4 C901,376.02 904.9,375.63 908.8,375 C912.7,374.37 916.6,373.47 920.5,372.6 C924.4,371.73 928.3,370.73 932.2,369.8 C936.1,368.87 940,367.97 943.9,367 C947.8,366.03 951.7,365.17 955.6,364 C959.5,362.83 963.4,361.07 967.3,360 C971.2,358.93 975.1,358.38 979,357.6 C982.9,356.82 986.8,356.12 990.7,355.3 C994.6,354.48 998.5,353.4 1002.4,352.7 C1006.3,352 1010.2,351.45 1014.1,351.1 C1018,350.75 1021.88,350.68 1025.8,350.6 C1029.72,350.52 1033.68,350.72 1037.6,350.6 C1041.52,350.48 1045.4,350.22 1049.3,349.9 C1053.2,349.58 1057.1,348.97 1061,348.7 C1064.9,348.43 1068.8,348.48 1072.7,348.3 C1076.6,348.12 1080.5,348 1084.4,347.6 C1088.3,347.2 1092.2,346.57 1096.1,345.9 C1100,345.23 1104.28,344.5 1107.8,343.6 C1111.32,342.7 1115.63,341.02 1117.2,340.5" fill="none" stroke="#f2c200" stroke-width="2.1" stroke-linecap="round"/>
<line x1="0" y1="248.5" x2="1441" y2="248.5" stroke="#fff" stroke-width="1.5"/>
<line x1="1149.5" y1="0" x2="1149.5" y2="460" stroke="#fff" stroke-width="1.5"/>
<polyline points="1117.2,292.8 1149.2,248.8 1309,290.4 1351.9,198.7" fill="none" stroke="#fff" stroke-width="1.4" stroke-linejoin="round" stroke-linecap="round"/>
<line x1="2.5" y1="457" x2="2.5" y2="460" stroke="#aaa" stroke-width="1"/>
<text x="2.35" y="454" text-anchor="middle" font-size="12" fill="#9a9a9a" font-family='"Liberation Sans", sans-serif'>Jan '15</text>
<line x1="137.5" y1="457" x2="137.5" y2="460" stroke="#aaa" stroke-width="1"/>
<text x="137.6" y="454" text-anchor="middle" font-size="12" fill="#9a9a9a" font-family='"Liberation Sans", sans-serif'>Jul</text>
<line x1="272.5" y1="457" x2="272.5" y2="460" stroke="#aaa" stroke-width="1"/>
<text x="272.6" y="454" text-anchor="middle" font-size="12" fill="#9a9a9a" font-family='"Liberation Sans", sans-serif'>Jan '16</text>
<line x1="407.5" y1="457" x2="407.5" y2="460" stroke="#aaa" stroke-width="1"/>
<text x="407" y="454" text-anchor="middle" font-size="12" fill="#9a9a9a" font-family='"Liberation Sans", sans-serif'>Jul</text>
<line x1="542.5" y1="457" x2="542.5" y2="460" stroke="#aaa" stroke-width="1"/>
<text x="542.5" y="454" text-anchor="middle" font-size="12" fill="#9a9a9a" font-family='"Liberation Sans", sans-serif'>Jan '17</text>
<line x1="676.5" y1="457" x2="676.5" y2="460" stroke="#aaa" stroke-width="1"/>
<text x="676.6" y="454" text-anchor="middle" font-size="12" fill="#9a9a9a" font-family='"Liberation Sans", sans-serif'>Jul</text>
<line x1="811.5" y1="457" x2="811.5" y2="460" stroke="#aaa" stroke-width="1"/>
<text x="811.4" y="454" text-anchor="middle" font-size="12" fill="#9a9a9a" font-family='"Liberation Sans", sans-serif'>Jan '18</text>
<line x1="946.5" y1="457" x2="946.5" y2="460" stroke="#aaa" stroke-width="1"/>
<text x="946.6" y="454" text-anchor="middle" font-size="12" fill="#9a9a9a" font-family='"Liberation Sans", sans-serif'>Jul</text>
<line x1="1086.5" y1="457" x2="1086.5" y2="460" stroke="#aaa" stroke-width="1"/>
<text x="1086.6" y="454" text-anchor="middle" font-size="12" fill="#9a9a9a" font-family='"Liberation Sans", sans-serif'>Jan '19</text>
<line x1="1441.5" y1="0" x2="1441.5" y2="687" stroke="#000" stroke-width="1"/>
<line x1="1442" y1="423.5" x2="1446" y2="423.5" stroke="#7a7a7a" stroke-width="1"/>
<text x="1451.5" y="427.21" font-size="12.25" fill="#747474" font-family='"Liberation Sans", sans-serif'>2,000</text>
<line x1="1442" y1="358.5" x2="1446" y2="358.5" stroke="#7a7a7a" stroke-width="1"/>
<text x="1451.5" y="362.35" font-size="12.25" fill="#747474" font-family='"Liberation Sans", sans-serif'>3,000</text>
<line x1="1442" y1="294.5" x2="1446" y2="294.5" stroke="#7a7a7a" stroke-width="1"/>
<text x="1451.5" y="297.49" font-size="12.25" fill="#747474" font-family='"Liberation Sans", sans-serif'>4,000</text>
<line x1="1442" y1="229.5" x2="1446" y2="229.5" stroke="#7a7a7a" stroke-width="1"/>
<text x="1451.5" y="232.63" font-size="12.25" fill="#747474" font-family='"Liberation Sans", sans-serif'>5,000</text>
<line x1="1442" y1="164.5" x2="1446" y2="164.5" stroke="#7a7a7a" stroke-width="1"/>
<text x="1451.5" y="167.77" font-size="12.25" fill="#747474" font-family='"Liberation Sans", sans-serif'>6,000</text>
<line x1="1442" y1="99.5" x2="1446" y2="99.5" stroke="#7a7a7a" stroke-width="1"/>
<text x="1451.5" y="102.91" font-size="12.25" fill="#747474" font-family='"Liberation Sans", sans-serif'>7,000</text>
<line x1="1442" y1="34.5" x2="1446" y2="34.5" stroke="#7a7a7a" stroke-width="1"/>
<text x="1451.5" y="38.05" font-size="12.25" fill="#747474" font-family='"Liberation Sans", sans-serif'>8,000</text>
<rect x="0" y="460" width="1495" height="3" fill="#000"/>
<rect x="0" y="572" width="1495" height="3" fill="#000"/>
<line x1="0" y1="468.5" x2="1441" y2="468.5" stroke="#191919" stroke-width="1"/>
<line x1="0" y1="517.5" x2="1441" y2="517.5" stroke="#191919" stroke-width="1"/>
<line x1="0" y1="566.5" x2="1441" y2="566.5" stroke="#191919" stroke-width="1"/>
<line x1="2.5" y1="463" x2="2.5" y2="572" stroke="#191919" stroke-width="1"/>
<line x1="137.5" y1="463" x2="137.5" y2="572" stroke="#191919" stroke-width="1"/>
<line x1="272.5" y1="463" x2="272.5" y2="572" stroke="#191919" stroke-width="1"/>
<line x1="407.5" y1="463" x2="407.5" y2="572" stroke="#191919" stroke-width="1"/>
<line x1="542.5" y1="463" x2="542.5" y2="572" stroke="#191919" stroke-width="1"/>
<line x1="676.5" y1="463" x2="676.5" y2="572" stroke="#191919" stroke-width="1"/>
<line x1="811.5" y1="463" x2="811.5" y2="572" stroke="#191919" stroke-width="1"/>
<line x1="946.5" y1="463" x2="946.5" y2="572" stroke="#191919" stroke-width="1"/>
<line x1="1086.5" y1="463" x2="1086.5" y2="572" stroke="#191919" stroke-width="1"/>
<line x1="1442" y1="468.5" x2="1446" y2="468.5" stroke="#7a7a7a" stroke-width="1"/>
<text x="1451.5" y="471.9" font-size="12.25" fill="#747474" font-family='"Liberation Sans", sans-serif'>100,00</text>
<line x1="1442" y1="517.5" x2="1446" y2="517.5" stroke="#7a7a7a" stroke-width="1"/>
<text x="1451.5" y="520.9" font-size="12.25" fill="#747474" font-family='"Liberation Sans", sans-serif'>50,00</text>
<line x1="1442" y1="566.5" x2="1446" y2="566.5" stroke="#7a7a7a" stroke-width="1"/>
<text x="1451.5" y="569.9" font-size="12.25" fill="#747474" font-family='"Liberation Sans", sans-serif'>0,00</text>
<line x1="0" y1="487.5" x2="1441" y2="487.5" stroke="#4f8c2c" stroke-width="1" stroke-dasharray="2,1"/>
<line x1="0" y1="547.5" x2="1441" y2="547.5" stroke="#a63b32" stroke-width="1" stroke-dasharray="2,1"/>
<clipPath id="c80"><rect x="0" y="463" width="1441" height="24.5"/></clipPath>
<clipPath id="c20"><rect x="0" y="547.5" width="1441" height="24.5"/></clipPath>
<polygon clip-path="url(#c80)" points="2.35,487.5 -2.84,497.5 2.35,496.6 7.54,494.2 12.73,491 17.91,489.9 23.1,485.4 28.29,489.9 33.48,507 38.66,517.4 43.85,528.7 49.04,542.3 54.23,543.1 59.42,543.1 64.6,544.3 69.79,539 74.98,539 80.17,538.6 85.35,543.1 90.54,539 95.73,539.9 100.92,535.9 106.11,531.9 111.29,520.3 116.48,522.2 121.67,517.4 126.86,514.6 132.04,512.3 137.23,519 142.42,518.2 147.61,514.2 152.8,505 157.98,506.2 163.17,498.2 168.36,498.2 173.55,507.8 178.74,526.3 183.92,533.5 189.11,543.1 194.3,551.1 199.49,556.2 204.67,551.9 209.86,547.1 215.05,547.9 220.24,549.1 225.43,551.4 230.61,547.1 235.8,552.4 240.99,549.8 246.18,532.7 251.36,519.8 256.55,518.2 261.74,514.6 266.93,515.8 272.12,531.9 277.3,541.5 282.49,550.8 287.68,554 292.87,557.5 298.05,554.6 303.24,552.4 308.43,533.5 313.62,515 318.81,503 323.99,486.2 329.18,478.2 334.37,479.8 339.56,481.4 344.74,489.4 349.93,494.2 355.12,493.1 360.31,493.4 365.5,495 370.68,498.5 375.87,507 381.06,522.2 386.25,539.1 391.44,548.7 396.62,552.7 401.81,550.8 407,549.5 412.19,552.7 417.37,555.6 422.56,551.4 427.75,549.5 432.94,544.7 438.13,540.7 443.31,533.1 448.5,532.7 453.69,528.7 458.88,525.8 464.06,522.2 469.25,519 474.44,526.7 479.63,524.6 484.82,522.2 490,515.8 495.19,513.4 500.38,497 505.57,491.5 510.75,487 515.94,488.3 521.13,486.2 526.32,495 531.51,503.8 536.69,511 541.88,517.1 547.07,517.4 552.26,511 557.44,503 562.63,497.4 567.82,491.5 573.01,495 578.2,505 583.38,507.8 588.57,510.2 593.76,513.4 598.95,516.2 604.13,508.3 609.32,511 614.51,509.8 619.7,514.2 624.89,515.8 630.07,528.7 635.26,535.9 640.45,547.9 645.64,553.5 650.83,555.1 656.01,556.2 661.2,549.5 666.39,538.3 671.58,530.3 676.76,523.8 681.95,515.8 687.14,505.4 692.33,506.2 697.52,502.2 702.7,499.6 707.89,505.4 713.08,523.8 718.27,521 723.45,519 728.64,516.6 733.83,507.8 739.02,492.6 744.21,495.8 749.39,507 754.58,523 759.77,528.7 764.96,531.5 770.14,527.9 775.33,516.6 780.52,500.6 785.71,494.2 790.9,492.6 796.08,495.8 801.27,506.2 806.46,513.4 811.65,515 816.83,523 822.02,531.9 827.21,530.3 832.4,539.1 837.59,549.5 842.77,550.3 847.96,545.5 853.15,547.9 858.34,543.1 863.52,536.7 868.71,538.3 873.9,540.7 879.09,537.1 884.28,539.9 889.46,535.1 894.65,515.8 899.84,505.4 905.03,494.2 910.22,479.8 915.4,472.3 920.59,472.3 925.78,473.4 930.97,477.7 936.15,480.9 941.34,483.5 946.53,485.4 951.72,485.7 956.91,485.7 962.09,487 967.28,488.3 972.47,491.5 977.66,502.2 982.84,505 988.03,508.2 993.22,517.8 998.41,519 1003.6,517.1 1008.78,525.5 1013.97,533.5 1019.16,539.9 1024.35,550.3 1029.53,555.6 1034.72,558.8 1039.91,550.8 1045.1,541.1 1050.29,523 1055.47,507 1060.66,501.1 1065.85,501.8 1071.04,511 1076.22,528.7 1081.41,545.5 1086.6,542.3 1091.79,530.3 1096.98,515.8 1102.16,500.6 1107.35,485.4 1112.54,478.7 1117.73,478.5 1117.73,487.5" fill="#3a5426"/>
<polygon clip-path="url(#c80)" points="2.35,487.5 -2.84,489.5 2.35,491.8 7.54,495 12.73,495 17.91,493.4 23.1,490.2 28.29,489.4 33.48,494.2 38.66,505.4 43.85,519 49.04,533.5 54.23,539.9 59.42,542.3 64.6,542.7 69.79,540.7 74.98,540.2 80.17,539.9 85.35,541.8 90.54,541.5 95.73,541.5 100.92,539 106.11,536.3 111.29,529.9 116.48,525.1 121.67,520.3 126.86,518.2 132.04,515 137.23,515.5 142.42,516.2 147.61,517.4 152.8,511.8 157.98,508.6 163.17,503.8 168.36,501.1 173.55,501.8 178.74,511 183.92,522.2 189.11,534.3 194.3,545.5 199.49,551.9 204.67,553.5 209.86,552.7 215.05,549.1 220.24,548.7 225.43,549.5 230.61,549.1 235.8,550.8 240.99,548.7 246.18,543.1 251.36,533.5 256.55,523.5 261.74,518.2 266.93,516.6 272.12,522.2 277.3,531.9 282.49,543.9 287.68,551.1 292.87,554.3 298.05,555.9 303.24,555.6 308.43,547.9 313.62,533.5 318.81,519 323.99,502.2 329.18,487.8 334.37,480.9 339.56,479 344.74,483.8 349.93,488.2 355.12,492.6 360.31,494.2 365.5,494.7 370.68,496.6 375.87,501.1 381.06,509.4 386.25,522.2 391.44,536.7 396.62,547.1 401.81,550.8 407,550.8 412.19,551.1 417.37,552.4 422.56,553.5 427.75,552.4 432.94,548.7 438.13,544.7 443.31,539.5 448.5,535.1 453.69,531.5 458.88,528.7 464.06,525.8 469.25,523 474.44,521.9 479.63,523.5 484.82,524.2 490,520.6 495.19,517.4 500.38,507 505.57,499.5 510.75,492.1 515.94,489.9 521.13,487.3 526.32,490.8 531.51,495.4 536.69,504.3 541.88,512.3 547.07,515.8 552.26,515 557.44,509.4 562.63,503 567.82,497.9 573.01,495.8 578.2,497.4 583.38,503 588.57,508.2 593.76,510.7 598.95,513 604.13,513.4 609.32,511.8 614.51,509.1 619.7,511 624.89,513 630.07,519.8 635.26,527.9 640.45,539.9 645.64,548.7 650.83,553.5 656.01,555.6 661.2,554.6 666.39,547.9 671.58,539.9 676.76,531.1 681.95,523 687.14,514.6 692.33,509.4 697.52,504.6 702.7,502.5 707.89,503.8 713.08,511.8 718.27,518.2 723.45,522.2 728.64,519 733.83,515 739.02,506.2 744.21,498.5 749.39,500.2 754.58,509.4 759.77,519.8 764.96,526.3 770.14,529 775.33,524.6 780.52,514.2 785.71,503.8 790.9,496.6 796.08,494.7 801.27,499 806.46,507 811.65,511.8 816.83,517.1 822.02,523.8 827.21,528.7 832.4,533.5 837.59,539.1 842.77,546.3 847.96,547.9 853.15,548.7 858.34,546.6 863.52,543.1 868.71,539.5 873.9,539.9 879.09,539.3 884.28,539.9 889.46,537.5 894.65,530.3 899.84,519 905.03,504.6 910.22,491.8 915.4,480.6 920.59,474.2 925.78,472.3 930.97,473.9 936.15,477.1 941.34,480.3 946.53,483.5 951.72,484.1 956.91,485.1 962.09,486.2 967.28,487 972.47,489.4 977.66,495 982.84,499.5 988.03,505.9 993.22,511 998.41,515 1003.6,517.4 1008.78,520.6 1013.97,525.5 1019.16,534.3 1024.35,543.1 1029.53,550.8 1034.72,554.6 1039.91,554.5 1045.1,549.5 1050.29,537.5 1055.47,522 1060.66,510.2 1065.85,503.8 1071.04,505 1076.22,514.2 1081.41,529.9 1086.6,539.5 1091.79,541.5 1096.98,531.1 1102.16,515.8 1107.35,501.4 1112.54,487.8 1117.73,480.9 1117.73,487.5" fill="#3a5426"/>
<polygon clip-path="url(#c20)" points="2.35,547.5 -2.84,497.5 2.35,496.6 7.54,494.2 12.73,491 17.91,489.9 23.1,485.4 28.29,489.9 33.48,507 38.66,517.4 43.85,528.7 49.04,542.3 54.23,543.1 59.42,543.1 64.6,544.3 69.79,539 74.98,539 80.17,538.6 85.35,543.1 90.54,539 95.73,539.9 100.92,535.9 106.11,531.9 111.29,520.3 116.48,522.2 121.67,517.4 126.86,514.6 132.04,512.3 137.23,519 142.42,518.2 147.61,514.2 152.8,505 157.98,506.2 163.17,498.2 168.36,498.2 173.55,507.8 178.74,526.3 183.92,533.5 189.11,543.1 194.3,551.1 199.49,556.2 204.67,551.9 209.86,547.1 215.05,547.9 220.24,549.1 225.43,551.4 230.61,547.1 235.8,552.4 240.99,549.8 246.18,532.7 251.36,519.8 256.55,518.2 261.74,514.6 266.93,515.8 272.12,531.9 277.3,541.5 282.49,550.8 287.68,554 292.87,557.5 298.05,554.6 303.24,552.4 308.43,533.5 313.62,515 318.81,503 323.99,486.2 329.18,478.2 334.37,479.8 339.56,481.4 344.74,489.4 349.93,494.2 355.12,493.1 360.31,493.4 365.5,495 370.68,498.5 375.87,507 381.06,522.2 386.25,539.1 391.44,548.7 396.62,552.7 401.81,550.8 407,549.5 412.19,552.7 417.37,555.6 422.56,551.4 427.75,549.5 432.94,544.7 438.13,540.7 443.31,533.1 448.5,532.7 453.69,528.7 458.88,525.8 464.06,522.2 469.25,519 474.44,526.7 479.63,524.6 484.82,522.2 490,515.8 495.19,513.4 500.38,497 505.57,491.5 510.75,487 515.94,488.3 521.13,486.2 526.32,495 531.51,503.8 536.69,511 541.88,517.1 547.07,517.4 552.26,511 557.44,503 562.63,497.4 567.82,491.5 573.01,495 578.2,505 583.38,507.8 588.57,510.2 593.76,513.4 598.95,516.2 604.13,508.3 609.32,511 614.51,509.8 619.7,514.2 624.89,515.8 630.07,528.7 635.26,535.9 640.45,547.9 645.64,553.5 650.83,555.1 656.01,556.2 661.2,549.5 666.39,538.3 671.58,530.3 676.76,523.8 681.95,515.8 687.14,505.4 692.33,506.2 697.52,502.2 702.7,499.6 707.89,505.4 713.08,523.8 718.27,521 723.45,519 728.64,516.6 733.83,507.8 739.02,492.6 744.21,495.8 749.39,507 754.58,523 759.77,528.7 764.96,531.5 770.14,527.9 775.33,516.6 780.52,500.6 785.71,494.2 790.9,492.6 796.08,495.8 801.27,506.2 806.46,513.4 811.65,515 816.83,523 822.02,531.9 827.21,530.3 832.4,539.1 837.59,549.5 842.77,550.3 847.96,545.5 853.15,547.9 858.34,543.1 863.52,536.7 868.71,538.3 873.9,540.7 879.09,537.1 884.28,539.9 889.46,535.1 894.65,515.8 899.84,505.4 905.03,494.2 910.22,479.8 915.4,472.3 920.59,472.3 925.78,473.4 930.97,477.7 936.15,480.9 941.34,483.5 946.53,485.4 951.72,485.7 956.91,485.7 962.09,487 967.28,488.3 972.47,491.5 977.66,502.2 982.84,505 988.03,508.2 993.22,517.8 998.41,519 1003.6,517.1 1008.78,525.5 1013.97,533.5 1019.16,539.9 1024.35,550.3 1029.53,555.6 1034.72,558.8 1039.91,550.8 1045.1,541.1 1050.29,523 1055.47,507 1060.66,501.1 1065.85,501.8 1071.04,511 1076.22,528.7 1081.41,545.5 1086.6,542.3 1091.79,530.3 1096.98,515.8 1102.16,500.6 1107.35,485.4 1112.54,478.7 1117.73,478.5 1117.73,547.5" fill="#5a2f2c"/>
<polygon clip-path="url(#c20)" points="2.35,547.5 -2.84,489.5 2.35,491.8 7.54,495 12.73,495 17.91,493.4 23.1,490.2 28.29,489.4 33.48,494.2 38.66,505.4 43.85,519 49.04,533.5 54.23,539.9 59.42,542.3 64.6,542.7 69.79,540.7 74.98,540.2 80.17,539.9 85.35,541.8 90.54,541.5 95.73,541.5 100.92,539 106.11,536.3 111.29,529.9 116.48,525.1 121.67,520.3 126.86,518.2 132.04,515 137.23,515.5 142.42,516.2 147.61,517.4 152.8,511.8 157.98,508.6 163.17,503.8 168.36,501.1 173.55,501.8 178.74,511 183.92,522.2 189.11,534.3 194.3,545.5 199.49,551.9 204.67,553.5 209.86,552.7 215.05,549.1 220.24,548.7 225.43,549.5 230.61,549.1 235.8,550.8 240.99,548.7 246.18,543.1 251.36,533.5 256.55,523.5 261.74,518.2 266.93,516.6 272.12,522.2 277.3,531.9 282.49,543.9 287.68,551.1 292.87,554.3 298.05,555.9 303.24,555.6 308.43,547.9 313.62,533.5 318.81,519 323.99,502.2 329.18,487.8 334.37,480.9 339.56,479 344.74,483.8 349.93,488.2 355.12,492.6 360.31,494.2 365.5,494.7 370.68,496.6 375.87,501.1 381.06,509.4 386.25,522.2 391.44,536.7 396.62,547.1 401.81,550.8 407,550.8 412.19,551.1 417.37,552.4 422.56,553.5 427.75,552.4 432.94,548.7 438.13,544.7 443.31,539.5 448.5,535.1 453.69,531.5 458.88,528.7 464.06,525.8 469.25,523 474.44,521.9 479.63,523.5 484.82,524.2 490,520.6 495.19,517.4 500.38,507 505.57,499.5 510.75,492.1 515.94,489.9 521.13,487.3 526.32,490.8 531.51,495.4 536.69,504.3 541.88,512.3 547.07,515.8 552.26,515 557.44,509.4 562.63,503 567.82,497.9 573.01,495.8 578.2,497.4 583.38,503 588.57,508.2 593.76,510.7 598.95,513 604.13,513.4 609.32,511.8 614.51,509.1 619.7,511 624.89,513 630.07,519.8 635.26,527.9 640.45,539.9 645.64,548.7 650.83,553.5 656.01,555.6 661.2,554.6 666.39,547.9 671.58,539.9 676.76,531.1 681.95,523 687.14,514.6 692.33,509.4 697.52,504.6 702.7,502.5 707.89,503.8 713.08,511.8 718.27,518.2 723.45,522.2 728.64,519 733.83,515 739.02,506.2 744.21,498.5 749.39,500.2 754.58,509.4 759.77,519.8 764.96,526.3 770.14,529 775.33,524.6 780.52,514.2 785.71,503.8 790.9,496.6 796.08,494.7 801.27,499 806.46,507 811.65,511.8 816.83,517.1 822.02,523.8 827.21,528.7 832.4,533.5 837.59,539.1 842.77,546.3 847.96,547.9 853.15,548.7 858.34,546.6 863.52,543.1 868.71,539.5 873.9,539.9 879.09,539.3 884.28,539.9 889.46,537.5 894.65,530.3 899.84,519 905.03,504.6 910.22,491.8 915.4,480.6 920.59,474.2 925.78,472.3 930.97,473.9 936.15,477.1 941.34,480.3 946.53,483.5 951.72,484.1 956.91,485.1 962.09,486.2 967.28,487 972.47,489.4 977.66,495 982.84,499.5 988.03,505.9 993.22,511 998.41,515 1003.6,517.4 1008.78,520.6 1013.97,525.5 1019.16,534.3 1024.35,543.1 1029.53,550.8 1034.72,554.6 1039.91,554.5 1045.1,549.5 1050.29,537.5 1055.47,522 1060.66,510.2 1065.85,503.8 1071.04,505 1076.22,514.2 1081.41,529.9 1086.6,539.5 1091.79,541.5 1096.98,531.1 1102.16,515.8 1107.35,501.4 1112.54,487.8 1117.73,480.9 1117.73,547.5" fill="#5a2f2c"/>
<polyline points="-2.84,497.5 2.35,496.6 7.54,494.2 12.73,491 17.91,489.9 23.1,485.4 28.29,489.9 33.48,507 38.66,517.4 43.85,528.7 49.04,542.3 54.23,543.1 59.42,543.1 64.6,544.3 69.79,539 74.98,539 80.17,538.6 85.35,543.1 90.54,539 95.73,539.9 100.92,535.9 106.11,531.9 111.29,520.3 116.48,522.2 121.67,517.4 126.86,514.6 132.04,512.3 137.23,519 142.42,518.2 147.61,514.2 152.8,505 157.98,506.2 163.17,498.2 168.36,498.2 173.55,507.8 178.74,526.3 183.92,533.5 189.11,543.1 194.3,551.1 199.49,556.2 204.67,551.9 209.86,547.1 215.05,547.9 220.24,549.1 225.43,551.4 230.61,547.1 235.8,552.4 240.99,549.8 246.18,532.7 251.36,519.8 256.55,518.2 261.74,514.6 266.93,515.8 272.12,531.9 277.3,541.5 282.49,550.8 287.68,554 292.87,557.5 298.05,554.6 303.24,552.4 308.43,533.5 313.62,515 318.81,503 323.99,486.2 329.18,478.2 334.37,479.8 339.56,481.4 344.74,489.4 349.93,494.2 355.12,493.1 360.31,493.4 365.5,495 370.68,498.5 375.87,507 381.06,522.2 386.25,539.1 391.44,548.7 396.62,552.7 401.81,550.8 407,549.5 412.19,552.7 417.37,555.6 422.56,551.4 427.75,549.5 432.94,544.7 438.13,540.7 443.31,533.1 448.5,532.7 453.69,528.7 458.88,525.8 464.06,522.2 469.25,519 474.44,526.7 479.63,524.6 484.82,522.2 490,515.8 495.19,513.4 500.38,497 505.57,491.5 510.75,487 515.94,488.3 521.13,486.2 526.32,495 531.51,503.8 536.69,511 541.88,517.1 547.07,517.4 552.26,511 557.44,503 562.63,497.4 567.82,491.5 573.01,495 578.2,505 583.38,507.8 588.57,510.2 593.76,513.4 598.95,516.2 604.13,508.3 609.32,511 614.51,509.8 619.7,514.2 624.89,515.8 630.07,528.7 635.26,535.9 640.45,547.9 645.64,553.5 650.83,555.1 656.01,556.2 661.2,549.5 666.39,538.3 671.58,530.3 676.76,523.8 681.95,515.8 687.14,505.4 692.33,506.2 697.52,502.2 702.7,499.6 707.89,505.4 713.08,523.8 718.27,521 723.45,519 728.64,516.6 733.83,507.8 739.02,492.6 744.21,495.8 749.39,507 754.58,523 759.77,528.7 764.96,531.5 770.14,527.9 775.33,516.6 780.52,500.6 785.71,494.2 790.9,492.6 796.08,495.8 801.27,506.2 806.46,513.4 811.65,515 816.83,523 822.02,531.9 827.21,530.3 832.4,539.1 837.59,549.5 842.77,550.3 847.96,545.5 853.15,547.9 858.34,543.1 863.52,536.7 868.71,538.3 873.9,540.7 879.09,537.1 884.28,539.9 889.46,535.1 894.65,515.8 899.84,505.4 905.03,494.2 910.22,479.8 915.4,472.3 920.59,472.3 925.78,473.4 930.97,477.7 936.15,480.9 941.34,483.5 946.53,485.4 951.72,485.7 956.91,485.7 962.09,487 967.28,488.3 972.47,491.5 977.66,502.2 982.84,505 988.03,508.2 993.22,517.8 998.41,519 1003.6,517.1 1008.78,525.5 1013.97,533.5 1019.16,539.9 1024.35,550.3 1029.53,555.6 1034.72,558.8 1039.91,550.8 1045.1,541.1 1050.29,523 1055.47,507 1060.66,501.1 1065.85,501.8 1071.04,511 1076.22,528.7 1081.41,545.5 1086.6,542.3 1091.79,530.3 1096.98,515.8 1102.16,500.6 1107.35,485.4 1112.54,478.7 1117.73,478.5" fill="none" stroke="#7c709e" stroke-width="1.6" stroke-linejoin="round" stroke-linecap="round"/>
<polyline points="-2.84,489.5 2.35,491.8 7.54,495 12.73,495 17.91,493.4 23.1,490.2 28.29,489.4 33.48,494.2 38.66,505.4 43.85,519 49.04,533.5 54.23,539.9 59.42,542.3 64.6,542.7 69.79,540.7 74.98,540.2 80.17,539.9 85.35,541.8 90.54,541.5 95.73,541.5 100.92,539 106.11,536.3 111.29,529.9 116.48,525.1 121.67,520.3 126.86,518.2 132.04,515 137.23,515.5 142.42,516.2 147.61,517.4 152.8,511.8 157.98,508.6 163.17,503.8 168.36,501.1 173.55,501.8 178.74,511 183.92,522.2 189.11,534.3 194.3,545.5 199.49,551.9 204.67,553.5 209.86,552.7 215.05,549.1 220.24,548.7 225.43,549.5 230.61,549.1 235.8,550.8 240.99,548.7 246.18,543.1 251.36,533.5 256.55,523.5 261.74,518.2 266.93,516.6 272.12,522.2 277.3,531.9 282.49,543.9 287.68,551.1 292.87,554.3 298.05,555.9 303.24,555.6 308.43,547.9 313.62,533.5 318.81,519 323.99,502.2 329.18,487.8 334.37,480.9 339.56,479 344.74,483.8 349.93,488.2 355.12,492.6 360.31,494.2 365.5,494.7 370.68,496.6 375.87,501.1 381.06,509.4 386.25,522.2 391.44,536.7 396.62,547.1 401.81,550.8 407,550.8 412.19,551.1 417.37,552.4 422.56,553.5 427.75,552.4 432.94,548.7 438.13,544.7 443.31,539.5 448.5,535.1 453.69,531.5 458.88,528.7 464.06,525.8 469.25,523 474.44,521.9 479.63,523.5 484.82,524.2 490,520.6 495.19,517.4 500.38,507 505.57,499.5 510.75,492.1 515.94,489.9 521.13,487.3 526.32,490.8 531.51,495.4 536.69,504.3 541.88,512.3 547.07,515.8 552.26,515 557.44,509.4 562.63,503 567.82,497.9 573.01,495.8 578.2,497.4 583.38,503 588.57,508.2 593.76,510.7 598.95,513 604.13,513.4 609.32,511.8 614.51,509.1 619.7,511 624.89,513 630.07,519.8 635.26,527.9 640.45,539.9 645.64,548.7 650.83,553.5 656.01,555.6 661.2,554.6 666.39,547.9 671.58,539.9 676.76,531.1 681.95,523 687.14,514.6 692.33,509.4 697.52,504.6 702.7,502.5 707.89,503.8 713.08,511.8 718.27,518.2 723.45,522.2 728.64,519 733.83,515 739.02,506.2 744.21,498.5 749.39,500.2 754.58,509.4 759.77,519.8 764.96,526.3 770.14,529 775.33,524.6 780.52,514.2 785.71,503.8 790.9,496.6 796.08,494.7 801.27,499 806.46,507 811.65,511.8 816.83,517.1 822.02,523.8 827.21,528.7 832.4,533.5 837.59,539.1 842.77,546.3 847.96,547.9 853.15,548.7 858.34,546.6 863.52,543.1 868.71,539.5 873.9,539.9 879.09,539.3 884.28,539.9 889.46,537.5 894.65,530.3 899.84,519 905.03,504.6 910.22,491.8 915.4,480.6 920.59,474.2 925.78,472.3 930.97,473.9 936.15,477.1 941.34,480.3 946.53,483.5 951.72,484.1 956.91,485.1 962.09,486.2 967.28,487 972.47,489.4 977.66,495 982.84,499.5 988.03,505.9 993.22,511 998.41,515 1003.6,517.4 1008.78,520.6 1013.97,525.5 1019.16,534.3 1024.35,543.1 1029.53,550.8 1034.72,554.6 1039.91,554.5 1045.1,549.5 1050.29,537.5 1055.47,522 1060.66,510.2 1065.85,503.8 1071.04,505 1076.22,514.2 1081.41,529.9 1086.6,539.5 1091.79,541.5 1096.98,531.1 1102.16,515.8 1107.35,501.4 1112.54,487.8 1117.73,480.9" fill="none" stroke="#ad4ea2" stroke-width="1.6" stroke-linejoin="round" stroke-linecap="round"/>
<line x1="0" y1="581.5" x2="1441" y2="581.5" stroke="#191919" stroke-width="1"/>
<line x1="0" y1="625.5" x2="1441" y2="625.5" stroke="#191919" stroke-width="1"/>
<line x1="0" y1="670.5" x2="1441" y2="670.5" stroke="#191919" stroke-width="1"/>
<line x1="2.5" y1="575" x2="2.5" y2="687" stroke="#191919" stroke-width="1"/>
<line x1="137.5" y1="575" x2="137.5" y2="687" stroke="#191919" stroke-width="1"/>
<line x1="272.5" y1="575" x2="272.5" y2="687" stroke="#191919" stroke-width="1"/>
<line x1="407.5" y1="575" x2="407.5" y2="687" stroke="#191919" stroke-width="1"/>
<line x1="542.5" y1="575" x2="542.5" y2="687" stroke="#191919" stroke-width="1"/>
<line x1="676.5" y1="575" x2="676.5" y2="687" stroke="#191919" stroke-width="1"/>
<line x1="811.5" y1="575" x2="811.5" y2="687" stroke="#191919" stroke-width="1"/>
<line x1="946.5" y1="575" x2="946.5" y2="687" stroke="#191919" stroke-width="1"/>
<line x1="1086.5" y1="575" x2="1086.5" y2="687" stroke="#191919" stroke-width="1"/>
<line x1="1442" y1="581.5" x2="1446" y2="581.5" stroke="#7a7a7a" stroke-width="1"/>
<text x="1451.5" y="584.7" font-size="12.25" fill="#747474" font-family='"Liberation Sans", sans-serif'>0,500</text>
<line x1="1442" y1="625.5" x2="1446" y2="625.5" stroke="#7a7a7a" stroke-width="1"/>
<text x="1451.5" y="629" font-size="12.25" fill="#747474" font-family='"Liberation Sans", sans-serif'>0,000</text>
<line x1="1442" y1="670.5" x2="1446" y2="670.5" stroke="#7a7a7a" stroke-width="1"/>
<text x="1451.5" y="673.9" font-size="12.25" fill="#747474" font-family='"Liberation Sans", sans-serif'>-0,500</text>
<rect x="0.5" y="619.7" width="3" height="5.3" fill="#6a5d22" stroke="#8c7a28" stroke-width="1"/>
<rect x="5.5" y="617.6" width="3" height="7.4" fill="#6a5d22" stroke="#8c7a28" stroke-width="1"/>
<rect x="10.5" y="616.5" width="3" height="8.5" fill="#6a5d22" stroke="#8c7a28" stroke-width="1"/>
<rect x="15.5" y="615.6" width="3" height="9.4" fill="#6a5d22" stroke="#8c7a28" stroke-width="1"/>
<rect x="20.5" y="615.6" width="3" height="9.4" fill="#6a5d22" stroke="#8c7a28" stroke-width="1"/>
<rect x="25.5" y="619.7" width="3" height="5.3" fill="#6a5d22" stroke="#8c7a28" stroke-width="1"/>
<rect x="30.5" y="623.5" width="4" height="1.5" fill="#6a5d22" stroke="#8c7a28" stroke-width="1"/>
<rect x="36.5" y="625" width="3" height="1" fill="#6a5d22" stroke="#8c7a28" stroke-width="1"/>
<rect x="41.5" y="626" width="3" height="1" fill="#6a5d22" stroke="#8c7a28" stroke-width="1"/>
<rect x="46.5" y="626" width="3" height="3.5" fill="#6a5d22" stroke="#8c7a28" stroke-width="1"/>
<rect x="51.5" y="626" width="3" height="5.5" fill="#6a5d22" stroke="#8c7a28" stroke-width="1"/>
<rect x="56.5" y="626" width="4" height="7.5" fill="#6a5d22" stroke="#8c7a28" stroke-width="1"/>
<rect x="62.5" y="626" width="3" height="11.4" fill="#6a5d22" stroke="#8c7a28" stroke-width="1"/>
<rect x="67.5" y="626" width="3" height="12.4" fill="#6a5d22" stroke="#8c7a28" stroke-width="1"/>
<rect x="72.5" y="626" width="3" height="14.3" fill="#6a5d22" stroke="#8c7a28" stroke-width="1"/>
<rect x="77.5" y="626" width="3" height="14.3" fill="#6a5d22" stroke="#8c7a28" stroke-width="1"/>
<rect x="82.5" y="626" width="4" height="17.3" fill="#6a5d22" stroke="#8c7a28" stroke-width="1"/>
<rect x="88.5" y="626" width="3" height="18.4" fill="#6a5d22" stroke="#8c7a28" stroke-width="1"/>
<rect x="93.5" y="626" width="3" height="19.3" fill="#6a5d22" stroke="#8c7a28" stroke-width="1"/>
<rect x="98.5" y="626" width="3" height="19.9" fill="#6a5d22" stroke="#8c7a28" stroke-width="1"/>
<rect x="103.5" y="626" width="3" height="19.3" fill="#6a5d22" stroke="#8c7a28" stroke-width="1"/>
<rect x="108.5" y="626" width="3" height="15.8" fill="#6a5d22" stroke="#8c7a28" stroke-width="1"/>
<rect x="113.5" y="626" width="4" height="14.4" fill="#6a5d22" stroke="#8c7a28" stroke-width="1"/>
<rect x="119.5" y="626" width="3" height="11.7" fill="#6a5d22" stroke="#8c7a28" stroke-width="1"/>
<rect x="124.5" y="626" width="3" height="10" fill="#6a5d22" stroke="#8c7a28" stroke-width="1"/>
<rect x="129.5" y="626" width="3" height="8.4" fill="#6a5d22" stroke="#8c7a28" stroke-width="1"/>
<rect x="134.5" y="626" width="3" height="8" fill="#6a5d22" stroke="#8c7a28" stroke-width="1"/>
<rect x="139.5" y="626" width="4" height="5.9" fill="#6a5d22" stroke="#8c7a28" stroke-width="1"/>
<rect x="145.5" y="626" width="3" height="2.1" fill="#6a5d22" stroke="#8c7a28" stroke-width="1"/>
<rect x="150.5" y="623.5" width="3" height="1.5" fill="#6a5d22" stroke="#8c7a28" stroke-width="1"/>
<rect x="155.5" y="621.4" width="3" height="3.6" fill="#6a5d22" stroke="#8c7a28" stroke-width="1"/>
<rect x="160.5" y="618.1" width="3" height="6.9" fill="#6a5d22" stroke="#8c7a28" stroke-width="1"/>
<rect x="165.5" y="618.6" width="4" height="6.4" fill="#6a5d22" stroke="#8c7a28" stroke-width="1"/>
<rect x="171.5" y="618.9" width="3" height="6.1" fill="#6a5d22" stroke="#8c7a28" stroke-width="1"/>
<rect x="176.5" y="623.8" width="3" height="1.2" fill="#6a5d22" stroke="#8c7a28" stroke-width="1"/>
<rect x="181.5" y="626" width="3" height="3.1" fill="#6a5d22" stroke="#8c7a28" stroke-width="1"/>
<rect x="186.5" y="626" width="3" height="5.9" fill="#6a5d22" stroke="#8c7a28" stroke-width="1"/>
<rect x="191.5" y="626" width="3" height="9.2" fill="#6a5d22" stroke="#8c7a28" stroke-width="1"/>
<rect x="196.5" y="626" width="4" height="10.4" fill="#6a5d22" stroke="#8c7a28" stroke-width="1"/>
<rect x="202.5" y="626" width="3" height="11.3" fill="#6a5d22" stroke="#8c7a28" stroke-width="1"/>
<rect x="207.5" y="626" width="3" height="10" fill="#6a5d22" stroke="#8c7a28" stroke-width="1"/>
<rect x="212.5" y="626" width="3" height="10.4" fill="#6a5d22" stroke="#8c7a28" stroke-width="1"/>
<rect x="217.5" y="626" width="3" height="12.5" fill="#6a5d22" stroke="#8c7a28" stroke-width="1"/>
<rect x="222.5" y="626" width="4" height="12" fill="#6a5d22" stroke="#8c7a28" stroke-width="1"/>
<rect x="228.5" y="626" width="3" height="9.2" fill="#6a5d22" stroke="#8c7a28" stroke-width="1"/>
<rect x="233.5" y="626" width="3" height="7.1" fill="#6a5d22" stroke="#8c7a28" stroke-width="1"/>
<rect x="238.5" y="626" width="3" height="5.9" fill="#6a5d22" stroke="#8c7a28" stroke-width="1"/>
<rect x="243.5" y="625" width="3" height="1" fill="#6a5d22" stroke="#8c7a28" stroke-width="1"/>
<rect x="248.5" y="623.5" width="4" height="1.5" fill="#6a5d22" stroke="#8c7a28" stroke-width="1"/>
<rect x="254.5" y="621.9" width="3" height="3.1" fill="#6a5d22" stroke="#8c7a28" stroke-width="1"/>
<rect x="259.5" y="622.7" width="3" height="2.3" fill="#6a5d22" stroke="#8c7a28" stroke-width="1"/>
<rect x="264.5" y="622.7" width="3" height="2.3" fill="#6a5d22" stroke="#8c7a28" stroke-width="1"/>
<rect x="269.5" y="622.7" width="3" height="2.3" fill="#6a5d22" stroke="#8c7a28" stroke-width="1"/>
<rect x="274.5" y="625" width="3" height="1" fill="#6a5d22" stroke="#8c7a28" stroke-width="1"/>
<rect x="279.5" y="626" width="4" height="2.1" fill="#6a5d22" stroke="#8c7a28" stroke-width="1"/>
<rect x="285.5" y="626" width="3" height="2.1" fill="#6a5d22" stroke="#8c7a28" stroke-width="1"/>
<rect x="290.5" y="626" width="3" height="5.1" fill="#6a5d22" stroke="#8c7a28" stroke-width="1"/>
<rect x="295.5" y="626" width="3" height="7.1" fill="#6a5d22" stroke="#8c7a28" stroke-width="1"/>
<rect x="300.5" y="626" width="3" height="5.9" fill="#6a5d22" stroke="#8c7a28" stroke-width="1"/>
<rect x="305.5" y="626" width="4" height="2.1" fill="#6a5d22" stroke="#8c7a28" stroke-width="1"/>
<rect x="311.5" y="625" width="3" height="1" fill="#6a5d22" stroke="#8c7a28" stroke-width="1"/>
<rect x="316.5" y="620.5" width="3" height="4.5" fill="#6a5d22" stroke="#8c7a28" stroke-width="1"/>
<rect x="321.5" y="617.6" width="3" height="7.4" fill="#6a5d22" stroke="#8c7a28" stroke-width="1"/>
<rect x="326.5" y="616.5" width="3" height="8.5" fill="#6a5d22" stroke="#8c7a28" stroke-width="1"/>
<rect x="331.5" y="614.5" width="4" height="10.5" fill="#6a5d22" stroke="#8c7a28" stroke-width="1"/>
<rect x="337.5" y="613.5" width="3" height="11.5" fill="#6a5d22" stroke="#8c7a28" stroke-width="1"/>
<rect x="342.5" y="613.5" width="3" height="11.5" fill="#6a5d22" stroke="#8c7a28" stroke-width="1"/>
<rect x="347.5" y="613.5" width="3" height="11.5" fill="#6a5d22" stroke="#8c7a28" stroke-width="1"/>
<rect x="352.5" y="612.7" width="3" height="12.3" fill="#6a5d22" stroke="#8c7a28" stroke-width="1"/>
<rect x="357.5" y="612.7" width="3" height="12.3" fill="#6a5d22" stroke="#8c7a28" stroke-width="1"/>
<rect x="362.5" y="613.7" width="4" height="11.3" fill="#6a5d22" stroke="#8c7a28" stroke-width="1"/>
<rect x="368.5" y="615.6" width="3" height="9.4" fill="#6a5d22" stroke="#8c7a28" stroke-width="1"/>
<rect x="373.5" y="617.6" width="3" height="7.4" fill="#6a5d22" stroke="#8c7a28" stroke-width="1"/>
<rect x="378.5" y="619.7" width="3" height="5.3" fill="#6a5d22" stroke="#8c7a28" stroke-width="1"/>
<rect x="383.5" y="621.9" width="3" height="3.1" fill="#6a5d22" stroke="#8c7a28" stroke-width="1"/>
<rect x="388.5" y="623.5" width="4" height="1.5" fill="#6a5d22" stroke="#8c7a28" stroke-width="1"/>
<rect x="394.5" y="625" width="3" height="1" fill="#6a5d22" stroke="#8c7a28" stroke-width="1"/>
<rect x="399.5" y="625" width="3" height="1" fill="#6a5d22" stroke="#8c7a28" stroke-width="1"/>
<rect x="404.5" y="626" width="3" height="3.1" fill="#6a5d22" stroke="#8c7a28" stroke-width="1"/>
<rect x="409.5" y="626" width="3" height="5.9" fill="#6a5d22" stroke="#8c7a28" stroke-width="1"/>
<rect x="414.5" y="626" width="4" height="8" fill="#6a5d22" stroke="#8c7a28" stroke-width="1"/>
<rect x="420.5" y="626" width="3" height="5.9" fill="#6a5d22" stroke="#8c7a28" stroke-width="1"/>
<rect x="425.5" y="626" width="3" height="5.1" fill="#6a5d22" stroke="#8c7a28" stroke-width="1"/>
<rect x="430.5" y="626" width="3" height="5.1" fill="#6a5d22" stroke="#8c7a28" stroke-width="1"/>
<rect x="435.5" y="626" width="3" height="3.8" fill="#6a5d22" stroke="#8c7a28" stroke-width="1"/>
<rect x="440.5" y="626" width="4" height="3.1" fill="#6a5d22" stroke="#8c7a28" stroke-width="1"/>
<rect x="446.5" y="626" width="3" height="1" fill="#6a5d22" stroke="#8c7a28" stroke-width="1"/>
<rect x="451.5" y="625" width="3" height="1" fill="#6a5d22" stroke="#8c7a28" stroke-width="1"/>
<rect x="456.5" y="625" width="3" height="1" fill="#6a5d22" stroke="#8c7a28" stroke-width="1"/>
<rect x="461.5" y="625" width="3" height="1" fill="#6a5d22" stroke="#8c7a28" stroke-width="1"/>
<rect x="466.5" y="625" width="3" height="1" fill="#6a5d22" stroke="#8c7a28" stroke-width="1"/>
<rect x="471.5" y="625" width="4" height="1" fill="#6a5d22" stroke="#8c7a28" stroke-width="1"/>
<rect x="477.5" y="625" width="3" height="1" fill="#6a5d22" stroke="#8c7a28" stroke-width="1"/>
<rect x="482.5" y="625" width="3" height="1" fill="#6a5d22" stroke="#8c7a28" stroke-width="1"/>
<rect x="487.5" y="623.5" width="3" height="1.5" fill="#6a5d22" stroke="#8c7a28" stroke-width="1"/>
<rect x="492.5" y="623.5" width="3" height="1.5" fill="#6a5d22" stroke="#8c7a28" stroke-width="1"/>
<rect x="497.5" y="621.9" width="4" height="3.1" fill="#6a5d22" stroke="#8c7a28" stroke-width="1"/>
<rect x="503.5" y="620.6" width="3" height="4.4" fill="#6a5d22" stroke="#8c7a28" stroke-width="1"/>
<rect x="508.5" y="618.6" width="3" height="6.4" fill="#6a5d22" stroke="#8c7a28" stroke-width="1"/>
<rect x="513.5" y="618.6" width="3" height="6.4" fill="#6a5d22" stroke="#8c7a28" stroke-width="1"/>
<rect x="518.5" y="617.6" width="3" height="7.4" fill="#6a5d22" stroke="#8c7a28" stroke-width="1"/>
<rect x="523.5" y="617.6" width="4" height="7.4" fill="#6a5d22" stroke="#8c7a28" stroke-width="1"/>
<rect x="529.5" y="618.6" width="3" height="6.4" fill="#6a5d22" stroke="#8c7a28" stroke-width="1"/>
<rect x="534.5" y="619.7" width="3" height="5.3" fill="#6a5d22" stroke="#8c7a28" stroke-width="1"/>
<rect x="539.5" y="620.9" width="3" height="4.1" fill="#6a5d22" stroke="#8c7a28" stroke-width="1"/>
<rect x="544.5" y="620.9" width="3" height="4.1" fill="#6a5d22" stroke="#8c7a28" stroke-width="1"/>
<rect x="549.5" y="620.6" width="3" height="4.4" fill="#6a5d22" stroke="#8c7a28" stroke-width="1"/>
<rect x="554.5" y="618.6" width="4" height="6.4" fill="#6a5d22" stroke="#8c7a28" stroke-width="1"/>
<rect x="560.5" y="618.6" width="3" height="6.4" fill="#6a5d22" stroke="#8c7a28" stroke-width="1"/>
<rect x="565.5" y="617.6" width="3" height="7.4" fill="#6a5d22" stroke="#8c7a28" stroke-width="1"/>
<rect x="570.5" y="619.7" width="3" height="5.3" fill="#6a5d22" stroke="#8c7a28" stroke-width="1"/>
<rect x="575.5" y="620.6" width="3" height="4.4" fill="#6a5d22" stroke="#8c7a28" stroke-width="1"/>
<rect x="580.5" y="620.9" width="4" height="4.1" fill="#6a5d22" stroke="#8c7a28" stroke-width="1"/>
<rect x="586.5" y="622.2" width="3" height="2.8" fill="#6a5d22" stroke="#8c7a28" stroke-width="1"/>
<rect x="591.5" y="622.2" width="3" height="2.8" fill="#6a5d22" stroke="#8c7a28" stroke-width="1"/>
<rect x="596.5" y="622.5" width="3" height="2.5" fill="#6a5d22" stroke="#8c7a28" stroke-width="1"/>
<rect x="601.5" y="622.7" width="3" height="2.3" fill="#6a5d22" stroke="#8c7a28" stroke-width="1"/>
<rect x="606.5" y="623.5" width="4" height="1.5" fill="#6a5d22" stroke="#8c7a28" stroke-width="1"/>
<rect x="612.5" y="625" width="3" height="1" fill="#6a5d22" stroke="#8c7a28" stroke-width="1"/>
<rect x="617.5" y="625" width="3" height="1" fill="#6a5d22" stroke="#8c7a28" stroke-width="1"/>
<rect x="622.5" y="625" width="3" height="1" fill="#6a5d22" stroke="#8c7a28" stroke-width="1"/>
<rect x="627.5" y="626" width="3" height="3.1" fill="#6a5d22" stroke="#8c7a28" stroke-width="1"/>
<rect x="632.5" y="626" width="3" height="4.8" fill="#6a5d22" stroke="#8c7a28" stroke-width="1"/>
<rect x="637.5" y="626" width="4" height="6.7" fill="#6a5d22" stroke="#8c7a28" stroke-width="1"/>
<rect x="643.5" y="626" width="3" height="6.4" fill="#6a5d22" stroke="#8c7a28" stroke-width="1"/>
<rect x="648.5" y="626" width="3" height="6.7" fill="#6a5d22" stroke="#8c7a28" stroke-width="1"/>
<rect x="653.5" y="626" width="3" height="6.7" fill="#6a5d22" stroke="#8c7a28" stroke-width="1"/>
<rect x="658.5" y="626" width="3" height="5.4" fill="#6a5d22" stroke="#8c7a28" stroke-width="1"/>
<rect x="663.5" y="626" width="4" height="4.3" fill="#6a5d22" stroke="#8c7a28" stroke-width="1"/>
<rect x="669.5" y="626" width="3" height="4.3" fill="#6a5d22" stroke="#8c7a28" stroke-width="1"/>
<rect x="674.5" y="626" width="3" height="3.8" fill="#6a5d22" stroke="#8c7a28" stroke-width="1"/>
<rect x="679.5" y="626" width="3" height="2.6" fill="#6a5d22" stroke="#8c7a28" stroke-width="1"/>
<rect x="684.5" y="626" width="3" height="1.8" fill="#6a5d22" stroke="#8c7a28" stroke-width="1"/>
<rect x="689.5" y="626" width="4" height="1" fill="#6a5d22" stroke="#8c7a28" stroke-width="1"/>
<rect x="695.5" y="625" width="3" height="1" fill="#6a5d22" stroke="#8c7a28" stroke-width="1"/>
<rect x="700.5" y="625" width="3" height="1" fill="#6a5d22" stroke="#8c7a28" stroke-width="1"/>
<rect x="705.5" y="625" width="3" height="1" fill="#6a5d22" stroke="#8c7a28" stroke-width="1"/>
<rect x="710.5" y="625" width="3" height="1" fill="#6a5d22" stroke="#8c7a28" stroke-width="1"/>
<rect x="715.5" y="623.5" width="3" height="1.5" fill="#6a5d22" stroke="#8c7a28" stroke-width="1"/>
<rect x="720.5" y="621.9" width="4" height="3.1" fill="#6a5d22" stroke="#8c7a28" stroke-width="1"/>
<rect x="726.5" y="620.9" width="3" height="4.1" fill="#6a5d22" stroke="#8c7a28" stroke-width="1"/>
<rect x="731.5" y="620.9" width="3" height="4.1" fill="#6a5d22" stroke="#8c7a28" stroke-width="1"/>
<rect x="736.5" y="620.9" width="3" height="4.1" fill="#6a5d22" stroke="#8c7a28" stroke-width="1"/>
<rect x="741.5" y="620.9" width="3" height="4.1" fill="#6a5d22" stroke="#8c7a28" stroke-width="1"/>
<rect x="746.5" y="621.9" width="4" height="3.1" fill="#6a5d22" stroke="#8c7a28" stroke-width="1"/>
<rect x="752.5" y="623" width="3" height="2" fill="#6a5d22" stroke="#8c7a28" stroke-width="1"/>
<rect x="757.5" y="623.9" width="3" height="1.1" fill="#6a5d22" stroke="#8c7a28" stroke-width="1"/>
<rect x="762.5" y="623.9" width="3" height="1.1" fill="#6a5d22" stroke="#8c7a28" stroke-width="1"/>
<rect x="767.5" y="622.2" width="3" height="2.8" fill="#6a5d22" stroke="#8c7a28" stroke-width="1"/>
<rect x="772.5" y="622.2" width="4" height="2.8" fill="#6a5d22" stroke="#8c7a28" stroke-width="1"/>
<rect x="778.5" y="621.4" width="3" height="3.6" fill="#6a5d22" stroke="#8c7a28" stroke-width="1"/>
<rect x="783.5" y="620.6" width="3" height="4.4" fill="#6a5d22" stroke="#8c7a28" stroke-width="1"/>
<rect x="788.5" y="622.2" width="3" height="2.8" fill="#6a5d22" stroke="#8c7a28" stroke-width="1"/>
<rect x="793.5" y="623" width="3" height="2" fill="#6a5d22" stroke="#8c7a28" stroke-width="1"/>
<rect x="798.5" y="623.9" width="3" height="1.1" fill="#6a5d22" stroke="#8c7a28" stroke-width="1"/>
<rect x="803.5" y="623.9" width="4" height="1.1" fill="#6a5d22" stroke="#8c7a28" stroke-width="1"/>
<rect x="809.5" y="625" width="3" height="1" fill="#6a5d22" stroke="#8c7a28" stroke-width="1"/>
<rect x="814.5" y="625" width="3" height="1" fill="#6a5d22" stroke="#8c7a28" stroke-width="1"/>
<rect x="819.5" y="625" width="3" height="1" fill="#6a5d22" stroke="#8c7a28" stroke-width="1"/>
<rect x="824.5" y="625" width="3" height="1" fill="#6a5d22" stroke="#8c7a28" stroke-width="1"/>
<rect x="829.5" y="626" width="4" height="1" fill="#6a5d22" stroke="#8c7a28" stroke-width="1"/>
<rect x="835.5" y="626" width="3" height="3.1" fill="#6a5d22" stroke="#8c7a28" stroke-width="1"/>
<rect x="840.5" y="626" width="3" height="3.1" fill="#6a5d22" stroke="#8c7a28" stroke-width="1"/>
<rect x="845.5" y="626" width="3" height="3.1" fill="#6a5d22" stroke="#8c7a28" stroke-width="1"/>
<rect x="850.5" y="626" width="3" height="3.1" fill="#6a5d22" stroke="#8c7a28" stroke-width="1"/>
<rect x="855.5" y="626" width="4" height="2.6" fill="#6a5d22" stroke="#8c7a28" stroke-width="1"/>
<rect x="861.5" y="626" width="3" height="2.1" fill="#6a5d22" stroke="#8c7a28" stroke-width="1"/>
<rect x="866.5" y="626" width="3" height="2.6" fill="#6a5d22" stroke="#8c7a28" stroke-width="1"/>
<rect x="871.5" y="626" width="3" height="2.6" fill="#6a5d22" stroke="#8c7a28" stroke-width="1"/>
<rect x="876.5" y="626" width="3" height="2.3" fill="#6a5d22" stroke="#8c7a28" stroke-width="1"/>
<rect x="881.5" y="626" width="3" height="2.1" fill="#6a5d22" stroke="#8c7a28" stroke-width="1"/>
<rect x="886.5" y="626" width="4" height="2.6" fill="#6a5d22" stroke="#8c7a28" stroke-width="1"/>
<rect x="892.5" y="625" width="3" height="1" fill="#6a5d22" stroke="#8c7a28" stroke-width="1"/>
<rect x="897.5" y="625" width="3" height="1" fill="#6a5d22" stroke="#8c7a28" stroke-width="1"/>
<rect x="902.5" y="623.5" width="3" height="1.5" fill="#6a5d22" stroke="#8c7a28" stroke-width="1"/>
<rect x="907.5" y="622.2" width="3" height="2.8" fill="#6a5d22" stroke="#8c7a28" stroke-width="1"/>
<rect x="912.5" y="621.4" width="4" height="3.6" fill="#6a5d22" stroke="#8c7a28" stroke-width="1"/>
<rect x="918.5" y="620.2" width="3" height="4.8" fill="#6a5d22" stroke="#8c7a28" stroke-width="1"/>
<rect x="923.5" y="618.1" width="3" height="6.9" fill="#6a5d22" stroke="#8c7a28" stroke-width="1"/>
<rect x="928.5" y="617.6" width="3" height="7.4" fill="#6a5d22" stroke="#8c7a28" stroke-width="1"/>
<rect x="933.5" y="617.6" width="3" height="7.4" fill="#6a5d22" stroke="#8c7a28" stroke-width="1"/>
<rect x="938.5" y="617.6" width="4" height="7.4" fill="#6a5d22" stroke="#8c7a28" stroke-width="1"/>
<rect x="944.5" y="617.6" width="3" height="7.4" fill="#6a5d22" stroke="#8c7a28" stroke-width="1"/>
<rect x="949.5" y="618.1" width="3" height="6.9" fill="#6a5d22" stroke="#8c7a28" stroke-width="1"/>
<rect x="954.5" y="618.9" width="3" height="6.1" fill="#6a5d22" stroke="#8c7a28" stroke-width="1"/>
<rect x="959.5" y="618.9" width="3" height="6.1" fill="#6a5d22" stroke="#8c7a28" stroke-width="1"/>
<rect x="964.5" y="619.7" width="3" height="5.3" fill="#6a5d22" stroke="#8c7a28" stroke-width="1"/>
<rect x="969.5" y="620.9" width="4" height="4.1" fill="#6a5d22" stroke="#8c7a28" stroke-width="1"/>
<rect x="975.5" y="623.5" width="3" height="1.5" fill="#6a5d22" stroke="#8c7a28" stroke-width="1"/>
<rect x="980.5" y="625" width="3" height="1" fill="#6a5d22" stroke="#8c7a28" stroke-width="1"/>
<rect x="985.5" y="625" width="3" height="1" fill="#6a5d22" stroke="#8c7a28" stroke-width="1"/>
<rect x="990.5" y="626" width="3" height="1" fill="#6a5d22" stroke="#8c7a28" stroke-width="1"/>
<rect x="995.5" y="626" width="4" height="1" fill="#6a5d22" stroke="#8c7a28" stroke-width="1"/>
<rect x="1001.5" y="626" width="3" height="2.1" fill="#6a5d22" stroke="#8c7a28" stroke-width="1"/>
<rect x="1006.5" y="626" width="3" height="3.1" fill="#6a5d22" stroke="#8c7a28" stroke-width="1"/>
<rect x="1011.5" y="626" width="3" height="4.3" fill="#6a5d22" stroke="#8c7a28" stroke-width="1"/>
<rect x="1016.5" y="626" width="3" height="5.9" fill="#6a5d22" stroke="#8c7a28" stroke-width="1"/>
<rect x="1021.5" y="626" width="4" height="7.1" fill="#6a5d22" stroke="#8c7a28" stroke-width="1"/>
<rect x="1027.5" y="626" width="3" height="8" fill="#6a5d22" stroke="#8c7a28" stroke-width="1"/>
<rect x="1032.5" y="626" width="3" height="8" fill="#6a5d22" stroke="#8c7a28" stroke-width="1"/>
<rect x="1037.5" y="626" width="3" height="7.1" fill="#6a5d22" stroke="#8c7a28" stroke-width="1"/>
<rect x="1042.5" y="626" width="3" height="5.9" fill="#6a5d22" stroke="#8c7a28" stroke-width="1"/>
<rect x="1047.5" y="626" width="3" height="2.1" fill="#6a5d22" stroke="#8c7a28" stroke-width="1"/>
<rect x="1052.5" y="625" width="4" height="1" fill="#6a5d22" stroke="#8c7a28" stroke-width="1"/>
<rect x="1058.5" y="625" width="3" height="1" fill="#6a5d22" stroke="#8c7a28" stroke-width="1"/>
<rect x="1063.5" y="625" width="3" height="1" fill="#6a5d22" stroke="#8c7a28" stroke-width="1"/>
<rect x="1068.5" y="625" width="3" height="1" fill="#6a5d22" stroke="#8c7a28" stroke-width="1"/>
<rect x="1073.5" y="626" width="3" height="1" fill="#6a5d22" stroke="#8c7a28" stroke-width="1"/>
<rect x="1078.5" y="626" width="4" height="2.1" fill="#6a5d22" stroke="#8c7a28" stroke-width="1"/>
<rect x="1084.5" y="626" width="3" height="1" fill="#6a5d22" stroke="#8c7a28" stroke-width="1"/>
<rect x="1089.5" y="625" width="3" height="1" fill="#6a5d22" stroke="#8c7a28" stroke-width="1"/>
<rect x="1094.5" y="625" width="3" height="1" fill="#6a5d22" stroke="#8c7a28" stroke-width="1"/>
<rect x="1099.5" y="623.5" width="3" height="1.5" fill="#6a5d22" stroke="#8c7a28" stroke-width="1"/>
<rect x="1104.5" y="622.2" width="4" height="2.8" fill="#6a5d22" stroke="#8c7a28" stroke-width="1"/>
<rect x="1110.5" y="620.9" width="3" height="4.1" fill="#6a5d22" stroke="#8c7a28" stroke-width="1"/>
<rect x="1115.5" y="619.7" width="3" height="5.3" fill="#6a5d22" stroke="#8c7a28" stroke-width="1"/>
<polyline points="-2.84,602.5 2.35,599.5 7.54,597 12.73,594.6 17.91,592.1 23.1,590.1 28.29,588.5 33.48,588 38.66,588 43.85,588.5 49.04,589.6 54.23,590.5 59.42,592.1 64.6,595.1 69.79,597.9 74.98,601.1 80.17,605.3 85.35,609.4 90.54,614.3 95.73,618.4 100.92,623.4 106.11,628.3 111.29,633.2 116.48,637.3 121.67,640.6 126.86,643.9 132.04,646.4 137.23,648.9 142.42,650 147.61,650.5 152.8,651 157.98,649.7 163.17,647.2 168.36,644.4 173.55,643.1 178.74,643.6 183.92,644.4 189.11,645.6 194.3,649.7 199.49,652.2 204.67,654.6 209.86,656.3 215.05,659.6 220.24,663.7 225.43,666.5 230.61,668.6 235.8,670.2 240.99,672.4 246.18,672.7 251.36,671.9 256.55,670.7 261.74,670.2 266.93,669.4 272.12,668.6 277.3,668.1 282.49,668.6 287.68,669.4 292.87,671.9 298.05,673.5 303.24,674.7 308.43,675.2 313.62,674.7 318.81,674.4 323.99,671.1 329.18,669.1 334.37,666.1 339.56,662.8 344.74,660.4 349.93,657.9 355.12,654.8 360.31,652.2 365.5,648.9 370.68,645.1 375.87,643.1 381.06,641.1 386.25,640.1 391.44,640.1 396.62,639.5 401.81,639.8 407,640.1 412.19,642.8 417.37,645.1 422.56,647.2 427.75,648.9 432.94,650 438.13,651 443.31,652.2 448.5,652.6 453.69,652.6 458.88,652.6 464.06,652.6 469.25,652.6 474.44,652.2 479.63,651.7 484.82,651.7 490,651 495.19,650.5 500.38,649.4 505.57,647.7 510.75,645.6 515.94,644.4 521.13,641.5 526.32,640 531.51,638.5 536.69,636.8 541.88,635.7 547.07,634 552.26,632.4 557.44,630.8 562.63,628.6 567.82,626.6 573.01,625 578.2,623.7 583.38,622 588.57,620.9 593.76,620.1 598.95,619.2 604.13,618.8 609.32,618.1 614.51,617.6 619.7,617.6 624.89,618.1 630.07,618.8 635.26,620.1 640.45,622.5 645.64,624.2 650.83,626.3 656.01,628.3 661.2,629.9 666.39,631.6 671.58,633.6 676.76,634.9 681.95,635.7 687.14,636.5 692.33,636.5 697.52,636.5 702.7,636.6 707.89,637.3 713.08,637.3 718.27,636.5 723.45,635.2 728.64,634 733.83,633.2 739.02,631.6 744.21,630.3 749.39,629.1 754.58,628.3 759.77,628 764.96,627 770.14,625.8 775.33,624.7 780.52,623.7 785.71,622.5 790.9,621.4 796.08,620.4 801.27,620.1 806.46,619.2 811.65,618.8 816.83,618.8 822.02,618.8 827.21,618.8 832.4,619.2 837.59,620.4 842.77,621.7 847.96,623 853.15,623.7 858.34,624.7 863.52,625.3 868.71,626.3 873.9,627 879.09,628 884.28,629.6 889.46,630.8 894.65,631.3 899.84,630.3 905.03,629.1 910.22,628 915.4,627 920.59,624.2 925.78,622 930.97,620.1 936.15,618.1 941.34,616 946.53,613.8 951.72,611.8 956.91,610.2 962.09,608.6 967.28,607.7 972.47,606.9 977.66,606.1 982.84,606.1 988.03,606.1 993.22,606.6 998.41,607.2 1003.6,608.6 1008.78,609.4 1013.97,610.5 1019.16,613.2 1024.35,615.5 1029.53,617.6 1034.72,619.7 1039.91,621.7 1045.1,623 1050.29,623.4 1055.47,623.3 1060.66,623.3 1065.85,623.3 1071.04,624.1 1076.22,625.3 1081.41,626.3 1086.6,626.6 1091.79,626.6 1096.98,626.9 1102.16,626.3 1107.35,625.3 1112.54,624.1 1117.73,623" fill="none" stroke="#d2606c" stroke-width="2" stroke-linejoin="round" stroke-linecap="round"/>
<polyline points="-2.84,595.5 2.35,592.9 7.54,588 12.73,583.9 17.91,580.9 23.1,579.3 28.29,581.9 33.48,584.2 38.66,587.5 43.85,590.5 49.04,593.4 54.23,596.2 59.42,601.1 64.6,606.9 69.79,611.8 74.98,616.4 80.17,620.9 85.35,629.9 90.54,634.9 95.73,639.8 100.92,644.7 106.11,648 111.29,650.5 116.48,654.3 121.67,654.3 126.86,655 132.04,655.4 137.23,657.1 142.42,658.7 147.61,653.8 152.8,648 157.98,643.9 163.17,639.5 168.36,638.2 173.55,636.2 178.74,641.6 183.92,648.9 189.11,654.6 194.3,659.6 199.49,665.3 204.67,667.5 209.86,669.1 215.05,672.4 220.24,676 225.43,678.5 230.61,678.5 235.8,678.5 240.99,678.5 246.18,672.7 251.36,669.4 256.55,667 261.74,665.8 266.93,664.8 272.12,664.8 277.3,667.8 282.49,671.4 287.68,673.5 292.87,677.3 298.05,680.1 303.24,681.8 308.43,678.5 313.62,674.7 318.81,670.2 323.99,664.2 329.18,660.4 334.37,654.9 339.56,650.5 344.74,647.7 349.93,645.4 355.12,640.8 360.31,638.2 365.5,635.2 370.68,635.7 375.87,634 381.06,635.2 386.25,636.5 391.44,637.8 396.62,639.5 401.81,640.6 407,643.9 412.19,648.9 417.37,653.8 422.56,653.8 427.75,655 432.94,655.8 438.13,655.8 443.31,655.4 448.5,654.6 453.69,654.1 458.88,653.8 464.06,652.2 469.25,651.3 474.44,650.5 479.63,649.7 484.82,648.9 490,648 495.19,647.2 500.38,644.7 505.57,640.6 510.75,637.8 515.94,635.7 521.13,633.6 526.32,631.7 531.51,630.8 536.69,629.9 541.88,629.9 547.07,628.3 552.26,626.6 557.44,623.7 562.63,621.4 567.82,618.8 573.01,618.1 578.2,617.6 583.38,617.1 588.57,616 593.76,616 598.95,616 604.13,616 609.32,616 614.51,616 619.7,617.1 624.89,618.8 630.07,623 635.26,628 640.45,630.8 645.64,632.4 650.83,634.5 656.01,636.2 661.2,637.3 666.39,638.5 671.58,638.5 676.76,638.5 681.95,639.5 687.14,638.5 692.33,638.2 697.52,638.2 702.7,637.5 707.89,637.8 713.08,637.3 718.27,634 723.45,631.3 728.64,629.1 733.83,628 739.02,626.3 744.21,625 749.39,624.7 754.58,625.3 759.77,625.3 764.96,624.7 770.14,623.4 775.33,621.7 780.52,619.7 785.71,618.1 790.9,617.1 796.08,617.1 801.27,617.1 806.46,617.1 811.65,617.1 816.83,617.6 822.02,618.8 827.21,620.1 832.4,622 837.59,625.3 842.77,626.6 847.96,627 853.15,627.5 858.34,628.6 863.52,629.1 868.71,630.3 873.9,630.8 879.09,631.6 884.28,633.6 889.46,633.6 894.65,631.3 899.84,628.6 905.03,625.3 910.22,623 915.4,620.4 920.59,617.6 925.78,614.3 930.97,612.7 936.15,609.9 941.34,608.6 946.53,606.9 951.72,604.9 956.91,603.9 962.09,602.3 967.28,601.1 972.47,601.1 977.66,603.9 982.84,604.9 988.03,606.9 993.22,608.6 998.41,610.5 1003.6,612.2 1008.78,614.3 1013.97,616 1019.16,619.2 1024.35,622.5 1029.53,625.8 1034.72,627.7 1039.91,628.4 1045.1,628.3 1050.29,626.3 1055.47,624.6 1060.66,625.3 1065.85,625.8 1071.04,625.8 1076.22,627.4 1081.41,629.1 1086.6,628.6 1091.79,626.9 1096.98,626.3 1102.16,624.1 1107.35,622 1112.54,619.7 1117.73,616.7" fill="none" stroke="#ea9c14" stroke-width="2" stroke-linejoin="round" stroke-linecap="round"/>
<path d="M5,5 H455 V20.5 H105 V36.5 H111 V52.5 H245 V68.5 H5 Z" fill="rgba(36,36,36,0.82)"/>
<line x1="7.5" y1="8.8" x2="7.5" y2="17.8" stroke="#6bbd3a" stroke-width="1.1"/>
<rect x="6.2" y="8.8" width="2.6" height="4.7" fill="#1f1f1f" stroke="#6bbd3a" stroke-width="1.1"/>
<line x1="11.4" y1="7.1" x2="11.4" y2="17.8" stroke="#6bbd3a" stroke-width="1.1"/>
<rect x="10.1" y="11.3" width="2.6" height="4.5" fill="#1f1f1f" stroke="#6bbd3a" stroke-width="1.1"/>
<line x1="15.5" y1="9.1" x2="15.5" y2="17.8" stroke="#6bbd3a" stroke-width="1.1"/>
<rect x="14.2" y="13.0" width="2.6" height="4.8" fill="#1f1f1f" stroke="#6bbd3a" stroke-width="1.1"/>
<text x="23.4" y="16.4" font-size="10.9" fill="#6bbd3a" font-family='"Liberation Sans", sans-serif' text-anchor="start">DEAG Deutsche Entertainment AG (XETRA, last)</text>
<text x="268" y="16.4" font-size="10.9" fill="#6bbd3a" font-family='"Liberation Sans", sans-serif' text-anchor="start">O: 3,780</text>
<text x="316.5" y="16.4" font-size="10.9" fill="#6bbd3a" font-family='"Liberation Sans", sans-serif' text-anchor="start">H: 4,000</text>
<text x="363.6" y="16.4" font-size="10.9" fill="#6bbd3a" font-family='"Liberation Sans", sans-serif' text-anchor="start">L: 3,730</text>
<text x="408.2" y="16.4" font-size="10.9" fill="#6bbd3a" font-family='"Liberation Sans", sans-serif' text-anchor="start">C: 3,940</text>
<rect x="8.9" y="27.8" width="8.2" height="3.3" fill="#f5c400"/>
<text x="23.5" y="32.5" font-size="10.9" fill="#eec000" font-family='"Liberation Sans", sans-serif' text-anchor="start">SMA(50)</text>
<text x="71.3" y="32.5" font-size="10.9" fill="#eec000" font-family='"Liberation Sans", sans-serif' text-anchor="start">3,285</text>
<rect x="8.9" y="43.9" width="8.2" height="3.3" fill="#2a9fd2"/>
<text x="23.5" y="48.2" font-size="10.9" fill="#2a9fd2" font-family='"Liberation Sans", sans-serif' text-anchor="start">SMA(200)</text>
<text x="77.5" y="48.2" font-size="10.9" fill="#2a9fd2" font-family='"Liberation Sans", sans-serif' text-anchor="start">3,405</text>
<circle cx="12.3" cy="60.4" r="5" fill="none" stroke="#fff" stroke-width="1.3"/>
<polyline points="12.3,57.2 12.3,60.6 14.6,62.8" fill="none" stroke="#fff" stroke-width="1.2"/>
<text x="23.1" y="64.4" font-size="10.9" fill="#e8e8e8" font-family='"Liberation Sans", sans-serif' text-anchor="start">05.01.2015 - 18.02.2019</text>
<text x="149.5" y="64.4" font-size="10.9" fill="#e8e8e8" font-family='"Liberation Sans", sans-serif' text-anchor="start">(4 Jahre, 1 Woche)</text>
<polygon points="1441,248.4 1448.4,238.6 1495,238.6 1495,258.2 1448.4,258.2" fill="#fff"/>
<text x="1451.6" y="252.4" font-size="12" fill="#2a2a2a" font-family='"Liberation Sans", sans-serif' text-anchor="start">4,711</text>
<polygon points="1441,298.5 1448.4,289 1495,289 1495,308 1448.4,308" fill="#6bbd3a"/>
<text x="1451.6" y="302.4" font-size="12" fill="#1a1a1a" font-family='"Liberation Sans", sans-serif' text-anchor="start">3,940</text>
<rect x="1111" y="439" width="76" height="21" fill="#fff"/>
<rect x="1149" y="457" width="1" height="3" fill="#222"/>
<text x="1149" y="453.8" font-size="12" fill="#222" font-family='"Liberation Sans", sans-serif' text-anchor="middle">01.04.2019</text>
<rect x="3" y="468" width="169" height="16" fill="rgba(34,34,34,0.75)"/>
<rect x="9.1" y="475" width="7.8" height="3.2" fill="#7c709e"/>
<text x="23.5" y="479.9" font-size="10.9" fill="#8078a0" font-family='"Liberation Sans", sans-serif' text-anchor="start">SSTOC(5, 5, 3)</text>
<text x="104.8" y="479.9" font-size="10.9" fill="#8078a0" font-family='"Liberation Sans", sans-serif' text-anchor="start">89,67</text>
<text x="137.6" y="479.9" font-size="10.9" fill="#b04fa2" font-family='"Liberation Sans", sans-serif' text-anchor="start">87,57</text>
<rect x="4" y="579" width="206" height="17" fill="rgba(34,34,34,0.72)"/>
<rect x="9" y="586.8" width="7.8" height="3.4" fill="#f2a20c"/>
<text x="23.5" y="591.7" font-size="10.9" fill="#e89a1a" font-family='"Liberation Sans", sans-serif' text-anchor="start">MACD(12, 26, 9)</text>
<text x="111.1" y="591.7" font-size="10.9" fill="#e89a1a" font-family='"Liberation Sans", sans-serif' text-anchor="start">0,107</text>
<text x="143.9" y="591.7" font-size="10.9" fill="#c8606a" font-family='"Liberation Sans", sans-serif' text-anchor="start">0,034</text>
<text x="176.6" y="591.7" font-size="10.9" fill="#8a7a30" font-family='"Liberation Sans", sans-serif' text-anchor="start">0,073</text>
</svg>
</body></html>
